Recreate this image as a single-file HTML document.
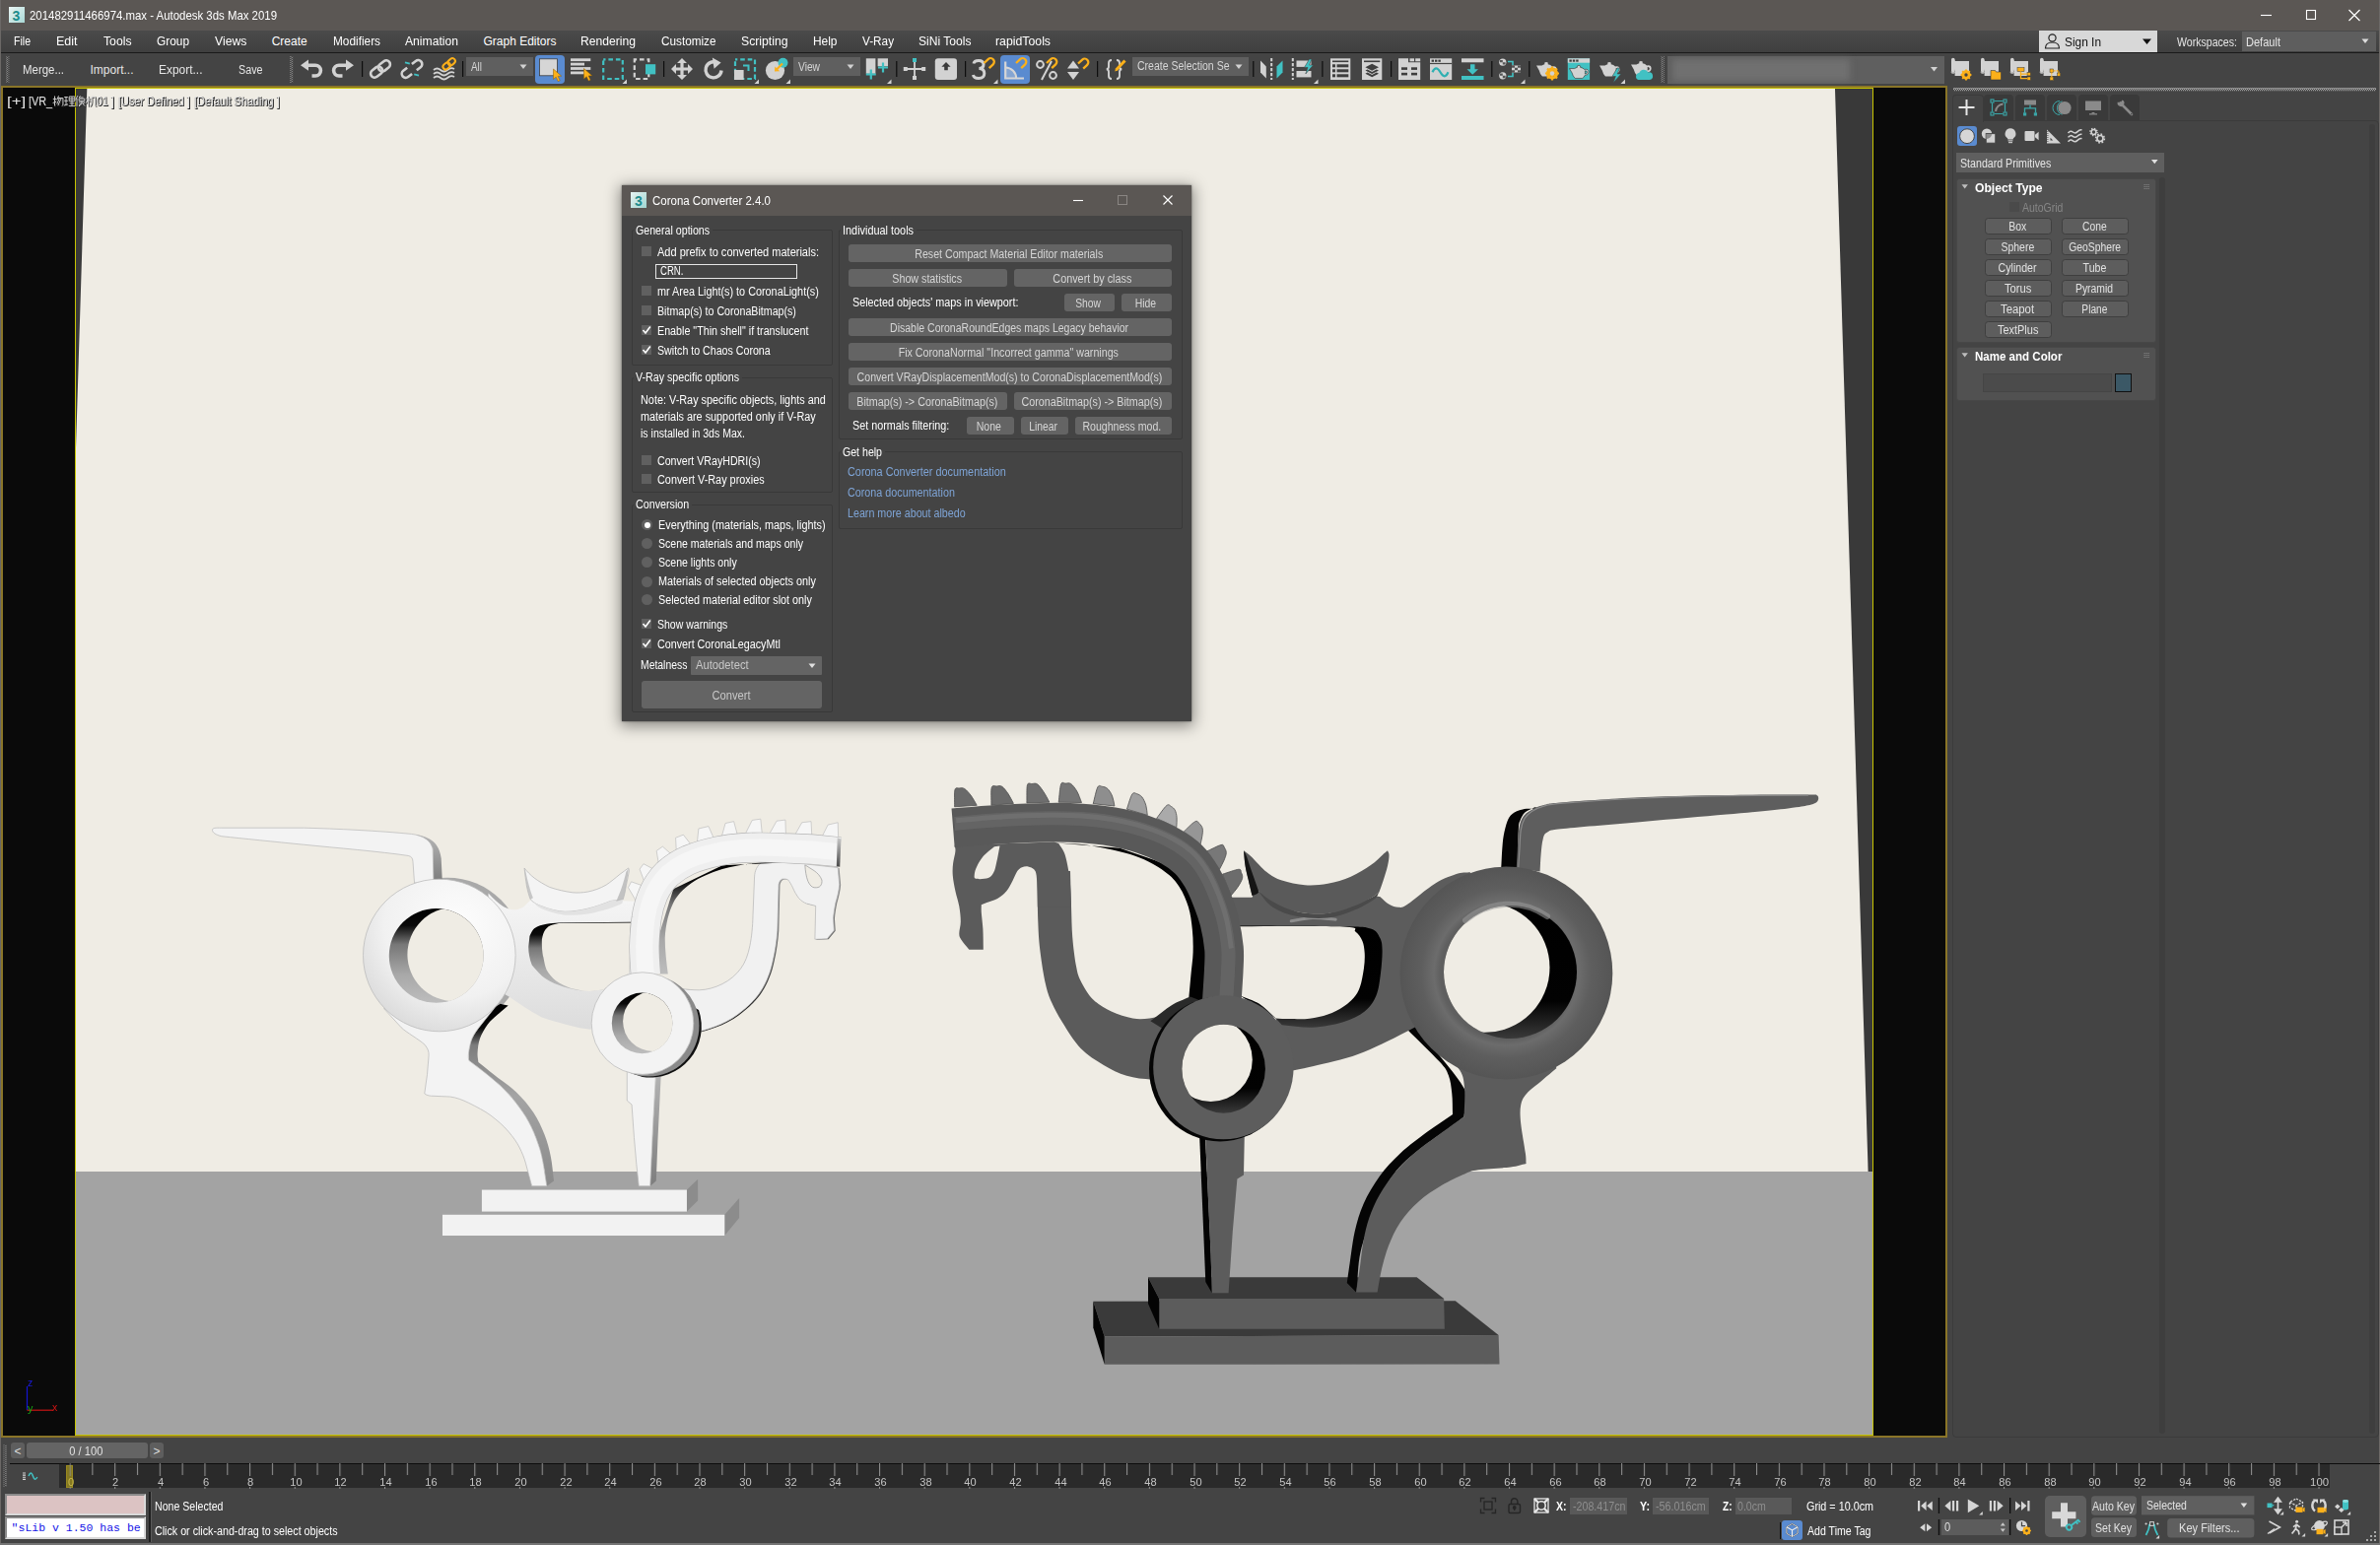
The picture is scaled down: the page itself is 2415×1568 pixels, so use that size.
<!DOCTYPE html>
<html lang="en"><head><meta charset="utf-8"><title>3ds Max</title>
<style>
html,body{margin:0;padding:0;background:#444;}
body{width:2415px;height:1568px;position:relative;overflow:hidden;font-family:"Liberation Sans",sans-serif;font-size:12px;color:#e1e1e1;}
.a{position:absolute;box-sizing:border-box;}
.t{position:absolute;white-space:pre;display:block;}
svg{position:absolute;left:0;top:0;overflow:visible;}
.btn{position:absolute;box-sizing:border-box;background:#646464;border-radius:3px;}
</style></head><body>
<!-- window frame -->
<div class="a" style="left:0;top:0;width:2415px;height:31px;background:#5b5754;"></div>
<div class="a" style="left:0;top:31px;width:2415px;height:22px;background:linear-gradient(#4a4a4a,#3f3f3f);"></div>
<div class="a" style="left:0;top:53px;width:2415px;height:1px;background:#1a1a1a;"></div>
<div class="a" style="left:0;top:54px;width:2415px;height:33px;background:#444;"></div>
<div class="a" style="left:0;top:0;width:1px;height:1568px;background:#6b6866;"></div>
<div class="a" style="left:2414px;top:0;width:1px;height:1568px;background:#6b6866;"></div>
<!-- title bar content -->
<div class="a" style="left:9px;top:7px;width:16px;height:16px;background:linear-gradient(135deg,#eaf5f4,#a9d8d5);"></div>
<span class="t" style="left:12.61px;top:8.65px;font-size:14px;line-height:14px;color:#1d8c8c;font-weight:700;">3</span>
<span class="t" style="left:29.70px;top:9.20px;font-size:13px;line-height:13px;color:#fff;transform:scaleX(0.8777);transform-origin:0 50%;">201482911466974.max - Autodesk 3ds Max 2019</span>
<svg width="2415" height="1568"><g stroke="#fff" stroke-width="1.1" fill="none">
<path d="M2294,15.5H2305"/><rect x="2340.5" y="10.5" width="9" height="9"/><path d="M2383.5,10L2394.5,21M2394.5,10L2383.5,21" stroke-width="1.2"/></g></svg>
<!-- menu bar -->
<span class="t" style="left:13.80px;top:35.64px;font-size:12px;line-height:12px;color:#fff;transform:scaleX(0.8792);transform-origin:0 50%;">File</span>
<span class="t" style="left:56.50px;top:35.64px;font-size:12px;line-height:12px;color:#fff;transform:scaleX(1.0398);transform-origin:0 50%;">Edit</span>
<span class="t" style="left:104.50px;top:35.64px;font-size:12px;line-height:12px;color:#fff;transform:scaleX(1.0174);transform-origin:0 50%;">Tools</span>
<span class="t" style="left:158.70px;top:35.64px;font-size:12px;line-height:12px;color:#fff;transform:scaleX(0.9895);transform-origin:0 50%;">Group</span>
<span class="t" style="left:217.80px;top:35.64px;font-size:12px;line-height:12px;color:#fff;transform:scaleX(1.0222);transform-origin:0 50%;">Views</span>
<span class="t" style="left:275.70px;top:35.64px;font-size:12px;line-height:12px;color:#fff;">Create</span>
<span class="t" style="left:337.50px;top:35.64px;font-size:12px;line-height:12px;color:#fff;transform:scaleX(0.9860);transform-origin:0 50%;">Modifiers</span>
<span class="t" style="left:410.70px;top:35.64px;font-size:12px;line-height:12px;color:#fff;transform:scaleX(1.0120);transform-origin:0 50%;">Animation</span>
<span class="t" style="left:490.50px;top:35.64px;font-size:12px;line-height:12px;color:#fff;">Graph Editors</span>
<span class="t" style="left:589.30px;top:35.64px;font-size:12px;line-height:12px;color:#fff;transform:scaleX(1.0113);transform-origin:0 50%;">Rendering</span>
<span class="t" style="left:670.50px;top:35.64px;font-size:12px;line-height:12px;color:#fff;transform:scaleX(0.9791);transform-origin:0 50%;">Customize</span>
<span class="t" style="left:751.50px;top:35.64px;font-size:12px;line-height:12px;color:#fff;transform:scaleX(1.0174);transform-origin:0 50%;">Scripting</span>
<span class="t" style="left:824.70px;top:35.64px;font-size:12px;line-height:12px;color:#fff;transform:scaleX(0.9927);transform-origin:0 50%;">Help</span>
<span class="t" style="left:874.60px;top:35.64px;font-size:12px;line-height:12px;color:#fff;transform:scaleX(0.9793);transform-origin:0 50%;">V-Ray</span>
<span class="t" style="left:931.50px;top:35.64px;font-size:12px;line-height:12px;color:#fff;transform:scaleX(1.0069);transform-origin:0 50%;">SiNi Tools</span>
<span class="t" style="left:1009.50px;top:35.64px;font-size:12px;line-height:12px;color:#fff;transform:scaleX(1.0238);transform-origin:0 50%;">rapidTools</span>
<!-- sign in / workspaces -->
<div class="a" style="left:2069px;top:31px;width:120px;height:22px;background:#d8d8d8;"></div>
<svg width="2415" height="1568"><g fill="none" stroke="#222" stroke-width="1.2"><circle cx="2082.5" cy="38.5" r="3.6"/><path d="M2075.5,49 q0,-6 7,-6 q7,0 7,6 z"/></g><path d="M2174,39.5h9l-4.5,5.5z" fill="#111"/>
</svg>
<span class="t" style="left:2095.00px;top:36.62px;font-size:12.5px;line-height:12.5px;color:#111;transform:scaleX(0.9508);transform-origin:0 50%;">Sign In</span>
<span class="t" style="left:2208.50px;top:36.84px;font-size:12px;line-height:12px;color:#e6e6e6;transform:scaleX(0.8823);transform-origin:0 50%;">Workspaces:</span>
<div class="a" style="left:2275px;top:32px;width:136px;height:20px;background:#5e5e5e;"></div>
<span class="t" style="left:2279.00px;top:36.84px;font-size:12px;line-height:12px;color:#e6e6e6;transform:scaleX(0.9205);transform-origin:0 50%;">Default</span>
<svg width="2415" height="1568"><path d="M2396.5,39.5h7l-3.5,4.5z" fill="#ddd"/></svg>
<!-- toolbar: text buttons -->
<span class="t" style="left:22.50px;top:65.14px;font-size:12px;line-height:12px;color:#e6e6e6;transform:scaleX(0.9542);transform-origin:0 50%;">Merge...</span>
<span class="t" style="left:91.50px;top:65.14px;font-size:12px;line-height:12px;color:#e6e6e6;">Import...</span>
<span class="t" style="left:161.30px;top:65.14px;font-size:12px;line-height:12px;color:#e6e6e6;transform:scaleX(0.9959);transform-origin:0 50%;">Export...</span>
<span class="t" style="left:241.80px;top:65.14px;font-size:12px;line-height:12px;color:#e6e6e6;transform:scaleX(0.8957);transform-origin:0 50%;">Save</span>
<!-- toolbar dropdowns -->
<div class="a" style="left:473px;top:58px;width:68px;height:19px;background:#5f5f5f;"></div>
<span class="t" style="left:477.50px;top:61.64px;font-size:12px;line-height:12px;color:#d6d6d6;transform:scaleX(0.8248);transform-origin:0 50%;">All</span>
<div class="a" style="left:805px;top:58px;width:68px;height:19px;background:#5f5f5f;"></div>
<span class="t" style="left:809.60px;top:61.64px;font-size:12px;line-height:12px;color:#d6d6d6;transform:scaleX(0.8529);transform-origin:0 50%;">View</span>
<div class="a" style="left:1149px;top:58px;width:118px;height:19px;background:#5f5f5f;"></div>
<span class="t" style="left:1153.60px;top:61.14px;font-size:12px;line-height:12px;color:#d6d6d6;transform:scaleX(0.8760);transform-origin:0 50%;">Create Selection Se</span>
<div class="a" style="left:1692px;top:57px;width:281px;height:28px;background:#5f5f5f;"></div>
<div class="a" style="left:1697px;top:60px;width:180px;height:22px;background:#707070;filter:blur(3px);"></div>
<!-- highlighted buttons -->
<div class="a" style="left:543px;top:56px;width:30px;height:29px;background:#5a8bd0;border-radius:4px;"></div>
<div class="a" style="left:1015px;top:56px;width:30px;height:29px;background:#5a8bd0;border-radius:4px;"></div>
<svg width="2415" height="1568" viewBox="0 0 2415 1568">
<defs>
<g id="magnet"><path d="M0,5.5 L4.2,1.6 a3.6,3.6 0 0 1 5,5.2 L5.2,10.6" fill="none" stroke="#fbb01a" stroke-width="2.3"/></g>
<g id="cursor"><path d="M0,0 L0,10.5 L2.7,8.2 L4.7,12.6 L6.7,11.7 L4.7,7.4 L8.2,7.2 Z" fill="#fbb01a" stroke="#8a5a00" stroke-width=".5"/></g>
<g id="teapot"><path d="M0,4.5 L5.5,4.5 Q7,3.5 8.3,3.2 L8.3,1.6 Q10,0.2 11.7,1.6 L11.7,3.2 Q14.5,3.6 16,5.5 Q20.5,4.5 20.6,8.5 Q20.5,12 16.4,12.2 Q15.5,14.6 14,15.5 L6,15.5 Q3.5,13 2.8,9.5 Z M16.7,7 Q16.9,9 16.6,10.6 Q18.9,10.4 18.9,8.6 Q18.8,6.8 16.7,7Z" fill="#d2d2d2" fill-rule="evenodd"/></g>
<g id="corner"><path d="M0,4.5L4.5,4.5L4.5,0Z" fill="#d2d2d2"/></g>
<g id="dd"><path d="M0,0h7l-3.5,4.5z" fill="#d2d2d2"/></g>
</defs>
<!-- grips -->
<g fill="#8a8a8a">
<rect x="6" y="57" width="3.4" height="27" fill="url(#gripP)"/>
</g>
<defs><pattern id="gripP" width="3.4" height="2" patternUnits="userSpaceOnUse"><rect x="0" y="0" width="1" height="1" fill="#9a9a9a"/><rect x="2" y="1" width="1" height="1" fill="#9a9a9a"/></pattern></defs>
<rect x="294" y="57" width="3.4" height="27" fill="url(#gripP)"/>
<rect x="1685.5" y="57" width="3.4" height="27" fill="url(#gripP)"/>
<!-- separators -->
<g fill="#0e0e0e">
<rect x="367" y="62" width="1.2" height="16"/><rect x="469" y="62" width="1.2" height="16"/><rect x="673" y="62" width="1.2" height="16"/>
<rect x="909.2" y="62" width="1.2" height="16"/><rect x="979" y="62" width="1.2" height="16"/><rect x="1113" y="62" width="1.2" height="16"/>
<rect x="1271.2" y="62" width="1.2" height="16"/><rect x="1341.3" y="62" width="1.2" height="16"/><rect x="1411" y="62" width="1.2" height="16"/>
<rect x="1513.2" y="62" width="1.2" height="16"/><rect x="1551.2" y="62" width="1.2" height="16"/>
</g>
<!-- undo / redo -->
<g transform="translate(305,60)" fill="#d2d2d2"><path d="M0,6.2L8,0.6V11.8Z"/><path d="M7,6.2H15a5.4,5.4 0 0 1 0,10.8H11.5" fill="none" stroke="#d2d2d2" stroke-width="3.6"/></g>
<g transform="translate(359,60) scale(-1,1)" fill="#d2d2d2"><path d="M0,6.2L8,0.6V11.8Z"/><path d="M7,6.2H15a5.4,5.4 0 0 1 0,10.8H11.5" fill="none" stroke="#d2d2d2" stroke-width="3.6"/></g>
<!-- link -->
<g transform="translate(386,70) rotate(-38)" fill="none" stroke="#d2d2d2" stroke-width="2.6"><rect x="-11.5" y="-4" width="13" height="8" rx="4"/><rect x="-1.5" y="-4" width="13" height="8" rx="4"/></g>
<!-- unlink -->
<g transform="translate(418,70) rotate(-38)" fill="none" stroke="#d2d2d2" stroke-width="2.6"><path d="M-3,-4H-8a4,4 0 0 0 0,8H-3"/><path d="M3,-4H8a4,4 0 0 1 0,8H3"/><path d="M-1.5,-9.5L1.5,-5.5M-1.5,5.5L1.5,9.5" stroke="#41c1c3" stroke-width="1.8"/></g>
<!-- bind space warp -->
<g transform="translate(439,60)" fill="none" stroke="#d2d2d2" stroke-width="1.8"><path d="M1,11 q3.5,-3 7,0 t7,0 t7,-1"/><path d="M1,15 q3.5,-3 7,0 t7,0 t7,-1"/><path d="M1,19 q3.5,-3 7,0 t7,0 t7,-1"/>
<g transform="translate(16.5,5) rotate(-40)" stroke="#fbb01a" stroke-width="2"><rect x="-7" y="-2.8" width="8" height="5.6" rx="2.8"/><rect x="-0.5" y="-2.8" width="8" height="5.6" rx="2.8"/></g></g>
<!-- dropdown arrows -->
<use href="#dd" x="527.5" y="65.5"/><use href="#dd" x="859.5" y="65.5"/><use href="#dd" x="1253.5" y="65.5"/><use href="#dd" x="1959" y="68"/>
<!-- select object -->
<rect x="547.5" y="59.8" width="18" height="17" fill="#d6d6d6" stroke="#3c3c3c" stroke-width=".8"/><use href="#cursor" x="561.5" y="70"/>
<!-- select by name -->
<g fill="#d2d2d2"><rect x="579" y="59.3" width="20.3" height="2.8"/><rect x="579" y="63.7" width="14" height="2.8"/><rect x="579" y="68.1" width="20.3" height="2.8"/><rect x="579" y="72.5" width="14" height="2.8"/></g><use href="#cursor" x="592.5" y="69.5"/>
<!-- rect region -->
<rect x="612.2" y="60.4" width="19.6" height="19.6" fill="none" stroke="#41c1c3" stroke-width="2.2" stroke-dasharray="4.6,2.9" stroke-dashoffset="2.3"/><use href="#corner" x="631.5" y="80.5"/>
<!-- window/crossing -->
<rect x="643.8" y="60.4" width="14.5" height="19.6" fill="none" stroke="#d2d2d2" stroke-width="2.2" stroke-dasharray="4.6,2.9" stroke-dashoffset="2.3"/><rect x="655" y="65.2" width="10.2" height="10.2" fill="#41c1c3"/>
<!-- move -->
<g transform="translate(692,70)" fill="#d2d2d2"><path d="M-11,0L-6,-5V-1.6H-1.6V-6H-5L0,-11L5,-6H1.6V-1.6H6V-5L11,0L6,5V1.6H1.6V6H5L0,11L-5,6H-1.6V1.6H-6V5Z"/></g>
<!-- rotate -->
<g transform="translate(724,71)" fill="none" stroke="#d2d2d2" stroke-width="3.4"><path d="M3,-7.6 A8,8 0 1 0 8,0.5"/><path d="M-1.2,-12.4L7.6,-7.6L0.6,-1.2Z" fill="#d2d2d2" stroke="none"/></g>
<!-- scale -->
<rect x="746" y="60.4" width="20" height="19.6" fill="none" stroke="#41c1c3" stroke-width="2.2" stroke-dasharray="4.6,2.9" stroke-dashoffset="2.3"/><rect x="745" y="71" width="9.6" height="10" fill="#d2d2d2"/><path d="M754,66.5H759.5V72" fill="none" stroke="#41c1c3" stroke-width="2"/><use href="#corner" x="765.5" y="80.5"/>
<!-- placement -->
<circle cx="786.5" cy="71.5" r="9.6" fill="#d2d2d2"/><circle cx="794.5" cy="63.8" r="5" fill="#41c1c3"/><path d="M794,64.5L787.5,71" stroke="#fbb01a" stroke-width="2.2"/><path d="M786,72.5L786.3,67.4L791.2,72.2Z" fill="#fbb01a"/><use href="#corner" x="797.5" y="80.5"/>
<!-- pivot -->
<g fill="#d2d2d2"><rect x="878.8" y="59.3" width="9.6" height="15.5"/><rect x="890.6" y="59.3" width="10.4" height="8"/></g>
<g stroke="#41c1c3" stroke-width="2.2"><path d="M883.8,70.5V80.5M878.8,75.5H888.8"/><path d="M896,63.5V73.5M891,68.5H901"/></g><use href="#corner" x="900" y="80.5"/>
<!-- manipulate -->
<g transform="translate(928,70)"><path d="M-10,0H10M0,-8V10" stroke="#d2d2d2" stroke-width="1.8"/><g fill="#d2d2d2"><rect x="-11.2" y="-2" width="4" height="4"/><rect x="7.2" y="-2" width="4" height="4"/><rect x="-2" y="7" width="4" height="4"/></g><rect x="-2" y="-11" width="4" height="4" fill="#41c1c3"/></g>
<!-- keyboard override -->
<rect x="948.8" y="59.3" width="22.2" height="21.7" rx="3" fill="#d2d2d2"/><path d="M960,63L964.6,67.8H961.8V71.2H958.2V67.8H955.4Z" fill="#3a3a3a"/>
<!-- snaps -->
<g transform="translate(987,61)"><path d="M1,3.5 Q1.5,0.5 6,0.5 Q11,0.5 11,4.5 Q11,8.2 6.5,8.6 Q11.8,9 11.8,13.5 Q11.8,18.5 6,18.5 Q1,18.5 0.5,15" fill="none" stroke="#d2d2d2" stroke-width="3"/><use href="#magnet" x="11.5" y="-2.5"/></g><use href="#corner" x="1008" y="80.5"/>
<g transform="translate(1019,60)"><path d="M1.2,2.5V19.5H20" fill="none" stroke="#d6d6d6" stroke-width="2.2"/><path d="M1.2,8.5A11,11 0 0 1 12.2,19.5" fill="none" stroke="#d6d6d6" stroke-width="2"/><path d="M1.2,8.5A11,11 0 0 1 12.2,19.5H1.2Z" fill="#d6d6d6" opacity=".35"/><use href="#magnet" x="12" y="-1.5"/></g>
<g transform="translate(1051,60)"><circle cx="4.5" cy="5.5" r="3.4" fill="none" stroke="#d2d2d2" stroke-width="2"/><circle cx="17.5" cy="16.5" r="3.4" fill="none" stroke="#d2d2d2" stroke-width="2"/><path d="M6,21L16,2" stroke="#d2d2d2" stroke-width="2"/><use href="#magnet" x="11" y="-1.5"/></g>
<g transform="translate(1083,60)"><path d="M0,9.5L6,1.5L12,9.5Z M0,13L12,13L6,21Z" fill="#d2d2d2"/><use href="#magnet" x="11" y="-1"/></g>
<!-- {} pencil -->
<g transform="translate(1122,60)" fill="none" stroke="#d2d2d2" stroke-width="1.9"><path d="M6,1 Q3,1 3,4 V7.5 Q3,10 0.8,10.3 Q3,10.6 3,13 V17 Q3,20 6,20"/><path d="M11,1 Q14,1 14,4 V7.5 Q14,10 16.2,10.3 Q14,10.6 14,13 V17 Q14,20 11,20"/><path d="M19.5,1.5L10.5,11" stroke="#fbb01a" stroke-width="3"/><path d="M9.2,12.4L10,9.8L11.8,11.6Z" fill="#fbb01a" stroke="none"/></g>
<!-- mirror -->
<g transform="translate(1279,59)"><path d="M0,2.5L5.8,8.5V20.5L0,14.5Z" fill="#d2d2d2"/><path d="M22.5,2.5L16.5,8.5V20.5L22.5,14.5Z" fill="#41c1c3"/><path d="M11.2,0V22" stroke="#d2d2d2" stroke-width="2" stroke-dasharray="3.2,1.8"/></g>
<!-- align -->
<g transform="translate(1310,59)"><path d="M1.8,0V22" stroke="#d2d2d2" stroke-width="2" stroke-dasharray="3.2,1.8"/><rect x="5.5" y="2.5" width="15" height="6.4" fill="#d2d2d2"/><rect x="5.5" y="13" width="15" height="6.4" fill="#d2d2d2"/><path d="M18.5,1L13.5,9.5H17L14.8,16L22.5,7H18.6L21,1Z" fill="#41c1c3" stroke="#444" stroke-width=".6"/></g><use href="#corner" x="1333" y="80.5"/>
<!-- scene explorer -->
<g transform="translate(1350,59.3)"><rect width="20.3" height="21.7" fill="#d2d2d2"/><g fill="#3e3e3e"><rect x="2" y="2.2" width="16.3" height="1.6"/><rect x="2" y="6" width="3" height="3"/><rect x="6.5" y="6" width="11.8" height="3"/><rect x="2" y="11" width="3" height="3"/><rect x="6.5" y="11" width="11.8" height="3"/><rect x="2" y="16" width="3" height="3"/><rect x="6.5" y="16" width="11.8" height="3"/></g></g>
<!-- layer explorer -->
<g transform="translate(1382,59.3)"><rect width="20.3" height="21.7" fill="#d2d2d2"/><g fill="#3e3e3e"><rect x="2" y="2.2" width="16.3" height="1.6"/><path d="M10.2,5.5L17,9L10.2,12.5L3.4,9Z"/><path d="M3.4,12.2L5.6,11.1L10.2,13.6L14.8,11.1L17,12.2L10.2,15.8Z"/><path d="M3.4,15.4L5.6,14.3L10.2,16.8L14.8,14.3L17,15.4L10.2,19Z"/></g></g>
<!-- ribbon -->
<g transform="translate(1419,59.3)"><path d="M0,0H10V4H22.2V21.7H0Z" fill="#d2d2d2"/><rect x="11.5" y="0" width="4.5" height="3" fill="#d2d2d2"/><rect x="17.2" y="0" width="5" height="3" fill="#d2d2d2"/><g fill="#3e3e3e"><rect x="3" y="9" width="6" height="2.6"/><rect x="13" y="9" width="6" height="2.6"/><rect x="3" y="14.5" width="6" height="2.6"/><rect x="13" y="14.5" width="6" height="2.6"/></g></g>
<!-- curve editor -->
<g transform="translate(1451,59.3)"><rect width="22.2" height="21.7" fill="#d2d2d2"/><rect x="0" y="4.6" width="22.2" height="1.2" fill="#444"/><g fill="#3e3e3e"><rect x="1.6" y="1.3" width="2.4" height="2.2"/><rect x="5" y="1.3" width="2.4" height="2.2"/><rect x="8.4" y="1.3" width="2.4" height="2.2"/></g><path d="M2.5,14 q3.5,-8 8,0 t8,0" fill="none" stroke="#2fb0b2" stroke-width="2.2"/></g>
<!-- dope sheet -->
<g transform="translate(1483,59.3)"><rect width="22.5" height="4" fill="#d2d2d2"/><rect x="0" y="17.7" width="22.5" height="4" fill="#41c1c3"/><path d="M9,6H13.5V11H17L11.2,16.5L5.5,11H9Z" fill="#41c1c3"/></g>
<!-- schematic -->
<g transform="translate(1521,59)"><circle cx="3.8" cy="4.2" r="3.6" fill="#d2d2d2"/><circle cx="3.8" cy="17.8" r="3.6" fill="#d2d2d2"/><rect x="13" y="7.5" width="9" height="7" fill="#d2d2d2"/><path d="M1,2h2.8v2.2h2.8v2.4H3.8V4.2H1Z M1,15.6h2.8v2.2h2.8v2.4H3.8V17.8H1Z M13,7.5h3v2.3h3V7.5h3v2.3h-3v2.4h3v2.3h-3v-2.3h-3v2.3h-3v-2.3h3V9.8h-3Z" fill="#555"/><path d="M9,3.5H14V7 M9,18.5H14V15" fill="none" stroke="#41c1c3" stroke-width="1.6"/></g><use href="#corner" x="1543" y="80.5"/>
<!-- teapots -->
<use href="#teapot" x="1559" y="62"/><g transform="translate(1575,74.5)"><circle r="4.6" fill="none" stroke="#fbb01a" stroke-width="3"/><g stroke="#fbb01a" stroke-width="2.2"><path d="M0,-7V7M-7,0H7M-5,-5L5,5M-5,5L5,-5"/></g><circle r="2.2" fill="#d2d2d2"/></g>
<rect x="1590.8" y="59.3" width="22.3" height="21.7" fill="#41c1c3"/><rect x="1590.8" y="59.3" width="22.3" height="4.4" fill="#d2d2d2"/><g fill="#3e3e3e"><rect x="1592.4" y="60.5" width="2.4" height="2.2"/><rect x="1595.8" y="60.5" width="2.4" height="2.2"/><rect x="1599.2" y="60.5" width="2.4" height="2.2"/></g><g transform="translate(1592.5,65.5) scale(.95,.9)"><use href="#teapot" stroke="#3a3a3a" stroke-width=".7"/></g>
<use href="#teapot" x="1623" y="62"/><path d="M1641,69L1636,77.5H1639.4L1637,84L1645,75H1641.2L1643.5,69Z" fill="#41c1c3" stroke="#444" stroke-width=".6"/><use href="#corner" x="1644.5" y="80.5"/>
<use href="#teapot" x="1655" y="61"/><path d="M1662.5,81 a3.6,3.6 0 0 1 0.8,-7 a5,5 0 0 1 9.2,-0.6 a3.8,3.8 0 0 1 1.4,7.6Z" fill="#41c1c3"/>
<!-- right-side toolbar icons (scrolls) -->
<g id="scroll"><path d="M1980,60.5 a1.8,1.8 0 0 1 3.6,0 V62H1998V77H1983.6V72" fill="#d2d2d2"/><rect x="1980" y="60" width="3.6" height="13" rx="1.8" fill="#d2d2d2"/><ellipse cx="1981.8" cy="73.2" rx="1.9" ry="1.6" fill="#d2d2d2"/><path d="M1980,72.5 a1.8,1.6 0 0 0 3.6,0" fill="none" stroke="#9a9a9a" stroke-width=".7"/></g>
<use href="#scroll" x="30"/><use href="#scroll" x="60"/><use href="#scroll" x="90"/>
<g transform="translate(1995,76)"><circle r="3.4" fill="none" stroke="#fbb01a" stroke-width="2.6"/><g stroke="#fbb01a" stroke-width="1.9"><path d="M0,-5.4V5.4M-5.4,0H5.4M-3.8,-3.8L3.8,3.8M-3.8,3.8L3.8,-3.8"/></g><circle r="1.7" fill="#444"/></g>
<path d="M2020,71.5H2024.5L2025.5,73H2030.5V81H2020Z" fill="#fbb01a" stroke="#3a3a3a" stroke-width=".6"/>
<g fill="#fbb01a" stroke="#3a3a3a" stroke-width=".5"><rect x="2047" y="68.5" width="7" height="4"/><rect x="2057" y="73.5" width="3.4" height="3.4"/><rect x="2057" y="78" width="3.4" height="3.4"/></g><path d="M2050.5,72.5V79.7H2057M2050.5,75.2H2057" fill="none" stroke="#fbb01a" stroke-width="1.3"/>
<g fill="#fbb01a" stroke="#3a3a3a" stroke-width=".5"><rect x="2080" y="70" width="3.6" height="3.6"/><rect x="2087.5" y="74" width="3.2" height="3.2"/><rect x="2080" y="78" width="3.6" height="3.6"/></g><path d="M2081.8,73.6V78M2083.6,71.8H2089V74" fill="none" stroke="#fbb01a" stroke-width="1.2" stroke-dasharray="2,1"/>
</svg>
<!-- viewport -->
<div class="a" style="left:1px;top:87px;width:1975px;height:1372px;background:#0a0a0a;border:2px solid #8a7528;"></div>
<div class="a" style="left:76px;top:89px;width:1825px;height:1368px;background:#efece4;border:1px solid #c6c400;"></div>
<svg width="2415" height="1568" viewBox="0 0 2415 1568">
<polygon points="77,90 88.3,90 77,455" fill="#393939"/>
<polygon points="1862,90 1900,90 1900,1189 1895.6,1189" fill="#393939"/>
<rect x="77" y="1189" width="1823" height="267" fill="#a3a3a3"/>
</svg>
<svg width="2415" height="1568" viewBox="0 0 2415 1568">
<defs>
<linearGradient id="wIn" x1="0" y1="0" x2="0" y2="1"><stop offset="0" stop-color="#000"/><stop offset=".18" stop-color="#0a0a0a"/><stop offset=".38" stop-color="#777"/><stop offset=".7" stop-color="#a8a8a8"/><stop offset="1" stop-color="#bdbdbd"/></linearGradient>
<linearGradient id="wSide" x1="0" y1="0" x2="0" y2="1"><stop offset="0" stop-color="#b5b5b5"/><stop offset="1" stop-color="#7d7d7d"/></linearGradient>
<radialGradient id="wRing" cx=".62" cy=".3" r=".8"><stop offset="0" stop-color="#fdfdfd"/><stop offset=".6" stop-color="#f1f1f1"/><stop offset="1" stop-color="#d6d6d6"/></radialGradient>
<linearGradient id="wBelly" x1="0" y1="0" x2="0" y2="1"><stop offset="0" stop-color="#f6f6f6"/><stop offset="1" stop-color="#dcdcdc"/></linearGradient>
<clipPath id="wcA"><circle cx="442.7" cy="969.9" r="47.9"/></clipPath>
<clipPath id="wcB"><circle cx="651.6" cy="1038.4" r="30.8"/></clipPath>
<linearGradient id="wLegSide" gradientUnits="userSpaceOnUse" x1="0" y1="-60" x2="0" y2="1088"><stop offset="0" stop-color="#000"/><stop offset=".125" stop-color="#080808"/><stop offset=".22" stop-color="#7c7c7c"/><stop offset=".5" stop-color="#a4a4a4"/><stop offset="1" stop-color="#8a8a8a"/></linearGradient>
<linearGradient id="wEdge" gradientUnits="userSpaceOnUse" x1="0" y1="350" x2="0" y2="1500"><stop offset="0" stop-color="#9a9a9a"/><stop offset=".45" stop-color="#6a6a6a"/><stop offset=".8" stop-color="#2a2a2a"/><stop offset="1" stop-color="#111"/></linearGradient>
<linearGradient id="wEnd" x1="0" y1="0" x2="0" y2="1"><stop offset="0" stop-color="#c9c9c9"/><stop offset=".5" stop-color="#8a8a8a"/><stop offset="1" stop-color="#4a4a4a"/></linearGradient>
</defs>
<circle cx="454" cy="967.5" r="76.8" fill="#a9a9a9"/>
<!-- ===== group A: tail + big ring (origin 200,820 s=6.439) ===== -->
<g transform="translate(200,820) scale(0.155304)">
 <path d="M1430,175 C1520,185 1585,230 1595,330 L1602,480 L1540,480 L1540,260 Z" fill="url(#wSide)"/>
 <path d="M100,145 C100,128 120,130 160,130 L700,130 C900,135 1200,150 1400,170 C1480,180 1530,215 1540,270 L1545,480 L1420,490 L1410,350 C1408,325 1400,318 1380,312 C1200,285 900,260 700,240 C500,220 300,200 160,185 C120,175 100,160 100,145 Z" fill="#f3f3f3" stroke="#b9b9b9" stroke-width="4.6"/>
</g>
<!-- ===== group C: legs (origin 380,1030 s=6.263) ===== -->
<g transform="translate(380,1030) scale(0.159668)">
 <!-- rear leg side -->
 <path d="M850.0,-60.0C826.7,-40.0 801.7,-20.0 780.0,0.0C758.3,20.0 738.3,35.0 720.0,60.0C701.7,85.0 680.8,120.0 670.0,150.0C659.2,180.0 656.7,215.0 655.0,240.0C653.3,265.0 658.3,280.0 660.0,300.0C693.3,326.7 720.0,348.3 760.0,380.0C800.0,411.7 858.3,450.0 900.0,490.0C941.7,530.0 980.0,575.0 1010.0,620.0C1040.0,665.0 1061.7,713.3 1080.0,760.0C1098.3,806.7 1110.0,850.8 1120.0,900.0C1130.0,949.2 1133.3,1003.3 1140.0,1055.0L1095.0,1088.0C1088.3,1045.3 1084.2,1004.7 1075.0,960.0C1065.8,915.3 1055.8,866.7 1040.0,820.0C1024.2,773.3 1003.3,723.3 980.0,680.0C956.7,636.7 930.0,598.3 900.0,560.0C870.0,521.7 836.7,485.0 800.0,450.0C763.3,415.0 713.3,376.7 680.0,350.0C646.7,323.3 626.7,310.0 600.0,290.0C600.0,270.0 596.7,253.3 600.0,230.0C603.3,206.7 606.7,178.3 620.0,150.0C633.3,121.7 656.7,91.7 680.0,60.0C703.3,28.3 740.0,-18.3 760.0,-40.0C780.0,-61.7 786.7,-60.0 800.0,-70.0L850.0,-60.0Z" fill="url(#wLegSide)"/>
 <!-- rear leg front -->
 <path d="M60,-40 L170,80 C200,110 290,160 320,190 C340,215 347,235 345,260 L335,380 L318,500 C330,510 345,514 360,515 L480,520 C520,525 560,540 600,560 C650,585 700,610 740,640 C780,670 820,705 850,740 C880,775 905,810 920,840 C940,880 952,910 960,940 L1000,1088 L1095,1088 L1075,960 C1065,900 1055,860 1040,820 C1025,775 1005,725 980,680 C960,640 930,600 900,560 C870,520 835,485 800,450 C760,415 720,380 680,350 L600,290 C595,270 597,250 600,230 C605,200 610,175 620,150 C635,115 655,90 680,60 L760,-40 Z" fill="#f3f3f3" stroke="#b9b9b9" stroke-width="4.6"/>
 <!-- front leg side -->
 <path d="M1790,360 L1822,355 L1800,800 L1790,1055 L1752,1088 L1770,700 Z" fill="url(#wSide)"/>
 <!-- front leg front -->
 <path d="M1605,340 L1605,545 L1635,570 L1650,780 L1665,950 L1680,1088 L1752,1088 L1770,700 L1790,340 Z" fill="#f3f3f3" stroke="#b9b9b9" stroke-width="4.6"/>
 <!-- base -->
 <polygon points="1985,1112 2055,1045 2055,1180 1985,1250" fill="#8c8c8c"/>
 <rect x="682" y="1112" width="1303" height="138" fill="#f2f2f2"/>
 <polygon points="2225,1270 2318,1165 2318,1290 2225,1403" fill="#8c8c8c"/>
 <rect x="432" y="1270" width="1793" height="133" fill="#f2f2f2"/>
</g>
<!-- ===== group D: body, saddle (origin 480,860 s=6.4375) ===== -->
<g transform="translate(480,860) scale(0.155340)">
 <!-- body: upper band + belly + junction -->
 <path d="M100,300 C170,380 230,415 290,405 C310,400 320,395 330,390 L375,345 L985,350 L1060,352 L1060,820 L850,930 L770,1190 C700,1180 650,1170 600,1155 C550,1140 500,1130 450,1110 C400,1085 370,1065 330,1040 L235,975 L100,900 Z" fill="url(#wBelly)"/>
 <!-- body hole -->
 <path d="M370,580 C380,555 390,540 400,530 C425,512 450,505 480,500 C510,495 530,493 560,492 L1030,488 L1020,820 L850,930 C800,935 750,937 700,935 C650,930 600,915 560,900 C520,885 480,865 450,840 C420,810 400,790 385,770 C370,730 362,690 362,650 Z" fill="url(#wIn)"/>
 <path d="M450,600 C455,575 460,555 470,540 C485,520 500,510 520,505 L560,495 L1030,492 L1020,820 L850,930 L760,940 C720,937 680,930 640,920 C600,905 570,890 540,870 C515,850 495,825 480,800 C470,775 465,750 460,720 C452,690 448,640 450,600 Z" fill="#efece4"/>
 <!-- saddle -->
 <path d="M335,135 C340,180 345,215 350,250 C357,285 365,315 375,340 C400,365 420,375 450,385 C500,405 550,418 600,420 C650,420 700,412 750,400 C800,388 850,370 900,350 L980,340 C990,310 995,280 1000,250 C1008,215 1015,180 1020,150 L1015,135 C995,150 980,160 960,175 C930,200 900,225 870,245 C830,268 790,282 750,290 C715,296 685,298 650,295 C600,288 550,277 500,260 C465,243 430,222 400,200 C375,180 355,160 335,135 Z" fill="#f4f4f4" stroke="#b4b4b4" stroke-width="4.6"/>
 <path d="M375,340 C400,365 420,375 450,385 C500,405 550,418 600,420 C650,420 700,412 750,400 C800,388 850,370 900,350 L980,340 L975,365 C940,385 850,415 750,435 C700,442 650,445 600,442 C540,435 470,415 420,385 Z" fill="#e2e2e2"/>
 <path d="M1016,138 C1012,180 1005,220 1000,250 C995,285 988,315 980,340 L935,352 C960,300 985,230 1000,160 Z" fill="#b9b9b9" opacity=".85"/>
 <path d="M335,135 C340,180 345,215 350,250 C357,285 365,315 375,340 L392,330 C372,280 352,200 342,150 Z" fill="#bcbcbc" opacity=".8"/>
</g>
<!-- big ring -->
<circle cx="445.8" cy="969.5" r="77.3" fill="url(#wRing)" stroke="#b9b9b9" stroke-width=".75"/>
<circle cx="442.7" cy="969.9" r="47.9" fill="url(#wIn)"/>
<circle cx="461" cy="968.6" r="47.6" fill="#efece4" clip-path="url(#wcA)"/>
<!-- ===== group B: neck, head, mane (origin 500,820 s=6.439) ===== -->
<g transform="translate(500,820) scale(0.155304)">
 <!-- mane teeth -->
 <g fill="#f6f6f6" stroke="#b8b8b8" stroke-width="4">
  <path d="M2150,190 L2190,110 L2255,95 L2258,200 Z"/>
  <path d="M1975,175 L2020,95 L2080,88 L2085,185 Z"/>
  <path d="M1810,165 L1855,85 L1912,78 L1915,175 Z"/>
  <path d="M1650,170 L1695,80 L1750,72 L1760,170 Z"/>
  <path d="M1495,190 L1520,100 L1575,88 L1600,180 Z"/>
  <path d="M1335,230 L1345,135 L1410,120 L1445,200 Z"/>
  <path d="M1200,290 L1195,195 L1245,175 L1300,245 Z"/>
  <path d="M1085,370 L1070,280 L1110,252 L1175,310 Z"/>
  <path d="M990,480 L960,400 L985,365 L1060,405 Z"/>
  <path d="M935,605 L885,520 L905,482 L985,510 Z"/>
 </g>
 <!-- chest S curve side (offset copy) -->
 <path d="M1760,350 C1725,380 1712,410 1710,450 L1700,700 C1698,780 1692,840 1680,900 C1668,960 1650,1010 1620,1050 C1590,1090 1550,1125 1500,1150 C1450,1175 1400,1188 1350,1190 C1310,1190 1270,1187 1230,1180 L1230,1480 L1310,1470 C1360,1460 1410,1445 1450,1430 C1500,1410 1555,1385 1600,1350 C1660,1305 1715,1255 1750,1200 C1790,1140 1815,1070 1830,1000 C1845,935 1855,870 1860,800 L1868,500 C1872,480 1880,470 1890,465 C1905,462 1918,463 1930,470 C1942,485 1950,500 1960,520 C1970,545 1985,570 2000,590 C2015,605 2030,617 2050,625 L2110,640 L2105,858 L2185,855 L2230,800 L2225,720 C2228,685 2233,655 2240,620 C2252,580 2262,540 2265,500 L2255,390 L2030,365 L1790,350 Z" fill="url(#wEdge)" transform="translate(9,3)"/>
 <!-- chest S curve front -->
 <path d="M1760,350 C1725,380 1712,410 1710,450 L1700,700 C1698,780 1692,840 1680,900 C1668,960 1650,1010 1620,1050 C1590,1090 1550,1125 1500,1150 C1450,1175 1400,1188 1350,1190 C1310,1190 1270,1187 1230,1180 L1230,1480 L1310,1470 C1360,1460 1410,1445 1450,1430 C1500,1410 1555,1385 1600,1350 C1660,1305 1715,1255 1750,1200 C1790,1140 1815,1070 1830,1000 C1845,935 1855,870 1860,800 L1868,500 C1872,480 1880,470 1890,465 C1905,462 1918,463 1930,470 C1942,485 1950,500 1960,520 C1970,545 1985,570 2000,590 C2015,605 2030,617 2050,625 L2110,640 L2105,858 L2185,855 L2230,800 L2225,720 C2228,685 2233,655 2240,620 C2252,580 2262,540 2265,500 L2255,390 L2030,365 L1790,350 Z" fill="#f1f1f1" stroke="#b6b6b6" stroke-width="4.6"/>
 <!-- eye loop -->
 <path d="M2040,372 C2042,410 2048,450 2060,480 C2072,505 2085,518 2100,520 C2120,522 2133,518 2140,510 C2150,498 2152,485 2150,470 C2140,445 2122,425 2100,410 Z" fill="#efece4" stroke="#a0a0a0" stroke-width="5"/>
 <!-- neck inner shadow (dark edge under tube) -->
 <path d="M2000,352 C1900,350 1800,352 1750,358 C1650,365 1570,380 1500,400 C1420,425 1350,455 1300,490 C1240,530 1200,580 1180,620 C1150,680 1130,760 1125,850 C1125,930 1135,1010 1145,1085 L1090,1085 L1080,850 L1180,530 L1500,375 Z" fill="url(#wIn)"/>
 <!-- neck / mane tube -->
 <path d="M2265,288 C2140,272 2020,264 1900,262 C1815,258 1735,256 1650,260 C1590,264 1530,270 1470,283 C1400,298 1340,315 1280,340 C1225,365 1180,395 1140,430 C1100,470 1070,515 1050,560 C1028,610 1012,665 1005,720 C996,780 992,840 990,900 C990,960 994,1020 1000,1090" fill="none" stroke="#b4b4b4" stroke-width="198"/>
 <path d="M2265,288 C2140,272 2020,264 1900,262 C1815,258 1735,256 1650,260 C1590,264 1530,270 1470,283 C1400,298 1340,315 1280,340 C1225,365 1180,395 1140,430 C1100,470 1070,515 1050,560 C1028,610 1012,665 1005,720 C996,780 992,840 990,900 C990,960 994,1020 1000,1090" fill="none" stroke="#efefef" stroke-width="190"/>
 <path d="M2265,288 C2140,272 2020,264 1900,262 C1815,258 1735,256 1650,260 C1590,264 1530,270 1470,283 C1400,298 1340,315 1280,340 C1225,365 1180,395 1140,430 C1100,470 1070,515 1050,560 C1028,610 1012,665 1005,720 C996,780 992,840 990,900 C990,960 994,1020 1000,1090" fill="none" stroke="#f6f6f6" stroke-width="110"/>
 <path d="M2252,195 L2276,203 L2268,385 L2246,382 Z" fill="url(#wEnd)"/>
</g>
<!-- small ring -->
<g>
 <path d="M700,1020 A51.8,51.8 0 0 1 640,1089 L652,1093 A51.8,51.8 0 0 0 709,1025 Z" fill="#111"/>
 <circle cx="658" cy="1041" r="51.5" fill="#8a8a8a"/>
 <circle cx="652" cy="1038.6" r="51.8" fill="#f3f3f3" stroke="#b9b9b9" stroke-width=".75"/>
 <circle cx="651.6" cy="1038.4" r="30.8" fill="url(#wIn)"/>
 <circle cx="662.5" cy="1036.5" r="30.4" fill="#efece4" clip-path="url(#wcB)"/>
</g>
</svg>
<svg width="2415" height="1568" viewBox="0 0 2415 1568">
<defs>
<linearGradient id="dWall" x1="0" y1="0" x2="0" y2="1"><stop offset="0" stop-color="#000"/><stop offset=".72" stop-color="#020202"/><stop offset=".9" stop-color="#262626"/><stop offset="1" stop-color="#3a3a3a"/></linearGradient>
<linearGradient id="dTube" x1="0" y1="0" x2="0" y2="1"><stop offset="0" stop-color="#555"/><stop offset="1" stop-color="#5e5e5e"/></linearGradient>
<radialGradient id="dRing" cx=".5" cy=".5" r=".5"><stop offset="0" stop-color="#5f5f5f"/><stop offset=".62" stop-color="#5f5f5f"/><stop offset=".68" stop-color="#6c6c6c"/><stop offset=".8" stop-color="#5e5e5e"/><stop offset="1" stop-color="#555"/></radialGradient>
<clipPath id="dcA"><circle cx="1532.5" cy="986.5" r="67.5"/></clipPath>
<clipPath id="dcB"><ellipse cx="1241.6" cy="1084.8" rx="42.3" ry="45"/></clipPath>
<clipPath id="dcRing"><circle cx="1528.4" cy="987.5" r="107.9"/></clipPath>
</defs>
<!-- base (group I) -->
<g transform="translate(1090,1040) scale(0.233008)">
<polygon points="83,1205 1660,1203 1848,1352 132,1358" fill="#3a3a3a"/>
<polygon points="132,1358 1848,1352 1852,1478 132,1480" fill="#5c5c5c"/>
<polygon points="83,1205 132,1358 132,1480 83,1320" fill="#040404"/>
<polygon points="322,1100 1492,1100 1610,1193 370,1193" fill="#3a3a3a"/>
<polygon points="370,1193 1610,1193 1613,1325 370,1325" fill="#5c5c5c"/>
<polygon points="322,1100 370,1193 370,1325 322,1215" fill="#040404"/>
</g>
<!-- tail -->
<path d="M1560.5,820.6C1558.4,820.9 1549.3,820.5 1545.0,821.4C1540.6,822.3 1537.2,823.9 1534.6,826.0C1532.0,828.0 1530.9,830.1 1529.4,833.8C1527.9,837.6 1526.6,843.5 1525.7,848.3C1524.8,853.2 1524.7,857.3 1524.2,862.8C1523.8,868.4 1523.6,875.3 1523.2,881.5L1539.8,881.5C1540.1,868.4 1540.4,850.2 1540.8,842.1C1541.3,834.0 1541.4,835.7 1542.5,832.8C1543.6,829.9 1545.0,826.8 1547.4,824.5C1549.9,822.3 1554.1,821.1 1557.4,819.3C1558.4,819.8 1562.6,820.2 1560.5,820.6Z" fill="#040404"/>
<path d="M1845.2,810.0C1845.2,808.8 1844.9,807.5 1843.2,806.9C1841.4,806.3 1850.1,806.5 1834.9,806.5C1819.7,806.5 1779.7,806.5 1752.0,806.9C1724.4,807.3 1696.8,807.8 1669.2,809.0C1641.6,810.2 1603.6,812.8 1586.4,814.2C1569.1,815.5 1571.2,815.9 1565.7,817.3C1560.1,818.7 1556.7,820.4 1553.2,822.5C1549.8,824.5 1547.0,826.4 1545.0,829.7C1543.0,833.0 1542.1,836.6 1541.2,842.1C1540.4,847.6 1540.2,856.3 1539.8,862.8C1539.4,869.4 1539.1,875.3 1538.7,881.5L1562.6,884.6C1562.9,878.7 1563.1,872.5 1563.6,867.0C1564.1,861.5 1564.6,855.2 1565.7,851.4C1566.8,847.7 1566.8,846.3 1570.2,844.6C1573.7,842.9 1569.9,842.9 1586.4,841.1C1602.9,839.3 1641.6,836.3 1669.2,833.8C1696.8,831.4 1727.9,828.8 1752.0,826.6C1776.2,824.4 1800.4,821.9 1814.2,820.4C1828.0,818.8 1830.0,818.3 1834.9,817.3C1839.7,816.2 1841.4,815.4 1843.2,814.2C1844.9,813.0 1845.2,811.2 1845.2,810.0Z" fill="#5e5e5e"/>
<path d="M1834.9,807.1C1821.1,807.2 1779.7,807.3 1752.0,807.7C1724.4,808.2 1696.8,808.8 1669.2,810.0C1641.6,811.3 1603.6,813.8 1586.4,815.2C1569.1,816.6 1571.0,816.9 1565.7,818.3C1560.3,819.7 1557.4,821.4 1554.3,823.5C1551.2,825.6 1548.9,827.6 1547.0,830.7C1545.2,833.8 1544.2,836.8 1543.3,842.1C1542.4,847.5 1542.3,856.4 1541.9,862.8C1541.4,869.2 1541.0,877.5 1540.8,880.4" fill="none" stroke="#8a8a8a" stroke-width="1.2"/>
<!-- rear leg -->
<path d="M1427.9,1044.7C1438.7,1055.5 1453.5,1069.5 1460.5,1077.3C1467.5,1085.0 1467.7,1085.8 1469.8,1091.3C1471.9,1096.7 1472.6,1103.3 1473.3,1109.9C1474.0,1116.5 1473.8,1123.9 1474.0,1130.9C1465.6,1136.7 1457.7,1141.7 1448.8,1148.3C1440.0,1155.0 1429.0,1162.9 1420.9,1170.5C1412.7,1178.1 1406.1,1185.2 1399.9,1193.8C1393.7,1202.3 1387.8,1212.4 1383.6,1221.7C1379.4,1231.1 1377.1,1239.6 1374.7,1249.7C1372.4,1259.8 1370.9,1273.6 1369.6,1282.3C1368.3,1291.1 1367.7,1295.5 1366.8,1302.1L1376.1,1311.5C1378.6,1294.0 1376.9,1279.4 1383.6,1259.0C1390.3,1238.6 1399.2,1210.1 1416.2,1189.1C1433.2,1168.2 1462.5,1151.8 1485.6,1133.2C1485.8,1123.9 1494.6,1120.8 1486.1,1105.2C1477.6,1089.7 1451.9,1061.7 1434.9,1040.0L1427.9,1044.7Z" fill="#050505"/>
<path d="M1434.9,1035.3C1444.2,1046.2 1455.0,1059.4 1462.8,1068.0C1470.6,1076.5 1477.6,1080.4 1481.5,1086.6C1485.3,1092.8 1485.4,1097.5 1486.1,1105.2C1486.8,1113.0 1485.8,1123.9 1485.6,1133.2C1478.0,1138.6 1471.3,1143.3 1462.8,1149.5C1454.3,1155.7 1442.6,1163.9 1434.9,1170.5C1427.1,1177.1 1422.0,1182.1 1416.2,1189.1C1410.4,1196.1 1404.4,1204.7 1399.9,1212.4C1395.4,1220.2 1392.1,1228.0 1389.4,1235.7C1386.7,1243.5 1385.1,1250.9 1383.6,1259.0C1382.0,1267.2 1381.3,1275.9 1380.1,1284.7C1378.9,1293.4 1377.5,1302.5 1376.1,1311.5L1397.6,1311.5C1399.1,1303.3 1400.3,1294.9 1402.2,1287.0C1404.2,1279.0 1406.1,1271.5 1409.2,1263.7C1412.3,1255.9 1415.8,1247.8 1420.9,1240.4C1425.9,1233.0 1432.5,1225.6 1439.5,1219.4C1446.5,1213.2 1455.0,1207.8 1462.8,1203.1C1470.6,1198.4 1479.9,1194.1 1486.1,1191.5C1492.3,1188.8 1492.3,1188.4 1500.1,1187.3C1507.9,1186.1 1524.6,1185.5 1532.7,1184.5C1540.8,1183.4 1543.3,1182.1 1548.6,1181.0C1548.3,1177.5 1548.8,1177.3 1547.9,1170.5C1547.0,1163.7 1544.0,1148.3 1543.2,1140.2C1542.4,1132.0 1542.2,1126.6 1543.2,1121.6C1544.2,1116.5 1545.3,1114.2 1549.0,1109.9C1552.7,1105.6 1560.3,1100.2 1565.3,1095.9C1570.4,1091.7 1574.7,1088.2 1579.3,1084.3L1570.0,1035.3L1434.9,1035.3Z" fill="#5c5c5c"/>
<!-- body: upper band, belly, junction to big ring (group F origin 1130,840 s 6.439) -->
<path d="M1248.0,910.7L1270.5,910.7C1272.4,908.3 1268.3,901.2 1276.0,903.7C1283.6,906.1 1304.5,921.5 1316.4,925.4C1328.3,929.3 1335.0,929.3 1347.4,927.0C1359.8,924.6 1382.1,914.3 1390.9,911.4C1399.7,908.6 1397.1,910.4 1400.2,909.9C1403.3,912.5 1406.4,915.8 1409.5,917.7C1412.7,919.5 1415.8,920.8 1418.9,920.8C1422.0,920.8 1422.0,921.7 1428.2,917.7C1434.4,913.6 1447.6,901.9 1456.1,896.7C1464.7,891.5 1473.5,888.5 1479.4,886.6C1485.4,884.7 1487.7,885.8 1491.9,885.3L1491.9,1010.8C1470.6,1022.7 1447.1,1036.7 1428.2,1046.6C1409.3,1056.4 1394.5,1063.9 1378.5,1069.8C1362.4,1075.8 1344.8,1079.2 1331.9,1082.3C1319.0,1085.4 1311.2,1086.4 1300.8,1088.5L1294.6,1033.4L1258.9,1010.8L1248.0,939.4L1248.0,910.7Z" fill="#5c5c5c"/>
<!-- body hole -->
<path d="M1257.3,939.4C1292.6,939.7 1340.7,939.7 1363.0,940.2C1385.2,940.7 1384.7,940.6 1390.9,942.5C1397.1,944.4 1398.3,948.2 1400.2,951.8C1402.2,955.4 1402.4,958.3 1402.6,964.2C1402.7,970.2 1402.0,979.8 1401.0,987.5C1400.0,995.3 1399.1,1004.4 1396.3,1010.8C1393.6,1017.3 1390.3,1022.0 1384.7,1026.4C1379.1,1030.8 1371.8,1034.5 1363.0,1037.2C1354.2,1040.0 1342.2,1042.2 1331.9,1042.7C1321.5,1043.2 1311.2,1041.1 1300.8,1040.3L1294.6,1033.4L1258.9,1010.8L1257.3,939.4Z" fill="url(#dWall)"/>
<path d="M1257.3,940.2C1292.6,940.3 1343.3,939.7 1363.0,940.6C1382.6,941.5 1372.1,943.2 1375.4,945.6C1378.6,948.0 1380.8,951.3 1382.4,954.9C1383.9,958.5 1384.4,962.7 1384.7,967.3C1385.0,972.0 1384.7,977.2 1383.9,982.9C1383.1,988.6 1381.7,996.6 1380.0,1001.5C1378.4,1006.4 1376.7,1009.0 1373.8,1012.4C1371.0,1015.8 1367.4,1018.9 1363.0,1021.7C1358.6,1024.6 1353.1,1027.5 1347.4,1029.5C1341.7,1031.5 1335.3,1033.0 1328.8,1033.8C1322.3,1034.6 1314.3,1034.2 1308.6,1034.1C1302.9,1034.1 1299.3,1033.6 1294.6,1033.4C1288.9,1028.4 1283.5,1022.4 1277.5,1018.6C1271.6,1014.8 1265.1,1013.4 1258.9,1010.8L1257.3,940.2Z" fill="#efece4"/>
<path d="M1310.2,934.7C1313.8,934.2 1324.4,931.9 1331.9,931.6C1339.4,931.4 1351.3,932.9 1355.2,933.2" fill="none" stroke="#9a9a9a" stroke-width="3" stroke-linecap="round" opacity=".8"/>
<!-- big ring -->
<circle cx="1528.4" cy="987.5" r="107.9" fill="url(#dRing)"/>
<circle cx="1532.5" cy="986.5" r="67.5" fill="url(#dWall)"/>
<circle cx="1506.6" cy="981.9" r="65.9" fill="#efece4" clip-path="url(#dcA)"/>
<path d="M1487,934 A68,68 0 0 1 1570,930" fill="none" stroke="#9c9c9c" stroke-width="6" stroke-linecap="round" opacity=".55" />
<!-- chest S-curve + head (src coords) -->
<path d="M1052.6,884.0C1052.8,901.1 1052.8,921.6 1053.3,935.3C1053.8,949.0 1054.3,955.8 1055.6,966.4C1056.9,977.0 1059.0,990.1 1060.9,998.6C1062.8,1007.1 1064.2,1010.8 1067.1,1017.3C1069.9,1023.8 1073.1,1029.7 1078.0,1037.5C1082.9,1045.3 1089.6,1056.7 1096.6,1063.9C1103.6,1071.1 1112.1,1076.2 1119.9,1080.9C1127.7,1085.6 1134.9,1089.3 1143.2,1091.8C1151.5,1094.3 1160.1,1095.0 1169.6,1095.7C1179.1,1096.4 1189.9,1095.9 1200.0,1096.0L1200.0,1029.0C1194.5,1029.2 1189.2,1028.9 1183.6,1029.7C1178.0,1030.5 1172.2,1032.9 1166.5,1033.6C1160.8,1034.2 1155.9,1034.8 1149.4,1033.6C1142.9,1032.4 1134.4,1029.8 1127.7,1026.6C1121.0,1023.4 1114.2,1019.4 1109.0,1014.2C1103.8,1009.0 1099.4,1001.2 1096.6,995.5C1093.8,989.8 1093.3,987.5 1091.9,980.0C1090.5,972.5 1089.0,960.8 1088.2,950.8C1087.4,940.8 1087.4,930.9 1087.0,919.8C1086.6,908.7 1086.3,895.9 1086.0,884.0L1052.6,884.0Z" fill="#5b5b5b"/>
<!-- head (group E origin 950,780) -->
<path d="M968.6,857.7C968.9,859.7 969.7,860.8 969.4,863.9C969.2,867.0 967.5,872.1 967.1,876.3C966.6,880.4 966.4,884.1 966.8,888.7C967.2,893.4 968.3,899.1 969.4,904.2C970.5,909.4 972.4,914.6 973.3,919.8C974.2,925.0 974.8,930.6 974.8,935.3C974.8,940.0 973.2,944.6 973.3,947.7C973.4,950.8 973.9,951.3 975.6,953.9C977.3,956.6 980.8,960.5 983.4,963.7L997.8,963.7C997.7,956.8 997.7,949.4 997.4,943.1C997.0,936.8 996.1,930.1 995.8,926.0C995.6,921.8 995.8,920.8 995.8,918.2C997.6,917.4 998.5,916.9 1001.3,915.9C1004.0,914.9 1008.8,913.9 1012.1,912.0C1015.5,910.1 1018.9,907.3 1021.4,904.2C1024.0,901.1 1025.8,896.7 1027.7,893.4C1029.5,890.0 1030.8,886.3 1032.3,884.1C1033.9,881.9 1035.2,880.9 1037.0,880.2C1038.8,879.4 1041.1,879.0 1043.2,879.4C1045.3,879.8 1048.0,880.9 1049.4,882.5C1050.8,884.1 1051.2,885.1 1051.7,888.7C1052.2,892.3 1052.3,898.9 1052.5,904.2C1052.7,909.5 1052.7,915.1 1052.8,920.5L1087.0,920.5C1086.8,915.1 1086.7,909.5 1086.4,904.2C1086.0,898.9 1086.1,894.9 1085.1,888.7C1084.1,882.5 1082.3,872.4 1080.5,867.0C1078.6,861.5 1076.3,859.7 1074.2,856.1L1069.6,854.5L968.6,857.7Z" fill="#5b5b5b"/>
<path d="M1014.5,858.4C1013.4,863.9 1012.4,870.2 1011.3,874.7C1010.3,879.3 1009.7,882.9 1008.2,885.6C1006.8,888.3 1005.8,890.0 1002.8,891.0C999.8,892.1 992.7,892.5 990.4,891.8C988.0,891.2 988.7,889.2 988.8,887.2C989.0,885.1 989.6,882.5 991.2,879.4C992.7,876.3 995.2,871.9 998.1,868.5C1001.1,865.2 1005.4,862.3 1009.0,859.2L1014.5,858.4Z" fill="#efece4"/>
<!-- mane teeth -->
<g fill="#6a6a6a" stroke="#4f4f4f" stroke-width=".8">
<path d="M968.6,818.8C968.7,813.1 968.2,804.9 968.9,801.7C969.7,798.6 971.7,800.1 973.3,799.9C974.9,799.7 976.7,799.2 978.7,800.5C980.8,801.8 983.6,805.2 985.7,808.0C987.8,810.8 989.3,814.2 991.2,817.3L968.6,818.8Z"/>
<path d="M1005.9,817.3C1006.0,811.3 1005.3,802.6 1006.2,799.4C1007.1,796.2 1009.6,798.0 1011.3,797.9C1013.1,797.7 1014.8,797.0 1016.8,798.3C1018.7,799.6 1021.1,802.8 1023.0,805.6C1024.9,808.5 1026.6,812.1 1028.4,815.4L1005.9,817.3Z"/>
<path d="M1041.9,814.9C1042.1,808.9 1041.6,800.0 1042.4,796.8C1043.3,793.5 1045.4,795.7 1047.1,795.5C1048.7,795.4 1050.6,794.5 1052.5,795.8C1054.4,797.1 1056.6,800.2 1058.7,803.3C1060.8,806.3 1062.9,810.5 1064.9,814.2L1041.9,814.9Z" fill="#6e6e6e"/>
<path d="M1074.2,814.2C1075.0,808.1 1075.4,799.2 1076.6,796.0C1077.7,792.8 1079.5,795.1 1081.2,795.1C1082.9,795.0 1084.7,794.2 1086.7,795.5C1088.6,796.9 1091.1,800.1 1092.9,803.3C1094.7,806.5 1096.0,810.8 1097.5,814.5L1074.2,814.2Z" fill="#757575"/>
<path d="M1109.2,815.7C1110.7,810.1 1112.3,801.8 1113.8,798.9C1115.4,796.0 1116.8,798.1 1118.5,798.3C1120.2,798.6 1122.3,798.9 1123.9,800.5C1125.6,802.1 1127.4,805.0 1128.6,808.0C1129.8,810.9 1130.2,814.7 1130.9,818.0L1109.2,815.7Z" fill="#8e8e8e"/>
<path d="M1143.4,821.2C1145.2,816.1 1147.1,808.7 1148.8,806.1C1150.5,803.5 1151.8,805.1 1153.4,805.6C1155.1,806.1 1157.3,807.1 1158.9,809.0C1160.4,811.0 1161.9,814.2 1162.8,817.3C1163.7,820.3 1163.8,824.0 1164.3,827.4L1143.4,821.2Z" fill="#a0a0a0"/>
<path d="M1173.6,830.5C1177.0,826.2 1181.3,819.6 1183.7,817.6C1186.2,815.6 1187.0,817.7 1188.4,818.5C1189.8,819.3 1191.3,820.4 1192.3,822.2C1193.2,824.1 1193.9,826.8 1194.1,829.7C1194.4,832.6 1193.9,836.4 1193.8,839.8L1173.6,830.5Z" fill="#aaa"/>
<path d="M1200.0,845.2C1204.2,841.4 1209.6,835.4 1212.5,833.9C1215.3,832.3 1215.8,834.7 1217.1,835.9C1218.4,837.1 1219.8,838.8 1220.2,840.9C1220.7,842.9 1220.3,845.5 1219.9,848.3C1219.5,851.1 1218.6,854.5 1217.9,857.7L1200.0,845.2Z" fill="#969696"/>
<path d="M1223.3,864.6C1228.5,862.3 1235.7,858.3 1238.9,857.5C1242.0,856.7 1241.4,858.6 1242.3,860.0C1243.2,861.4 1244.4,863.5 1244.3,865.7C1244.2,867.9 1243.1,870.4 1242.0,873.2C1240.8,876.0 1238.9,879.4 1237.3,882.5L1223.3,864.6Z" fill="#787878"/>
<path d="M1240.4,887.2C1245.9,885.6 1253.5,882.6 1256.7,882.3C1259.9,882.1 1258.9,884.1 1259.5,885.6C1260.2,887.1 1261.2,888.9 1260.6,891.4C1260.0,893.8 1257.9,897.4 1255.9,900.4C1254.0,903.3 1251.3,906.1 1249.0,908.9L1240.4,887.2Z" fill="#6c6c6c"/>
</g>
<!-- neck inner wall (black) -->
<path d="M1069.6,855.3C1081.5,856.3 1091.6,855.9 1105.3,858.1C1119.0,860.4 1139.2,864.5 1151.9,868.8C1164.6,873.2 1174.3,879.2 1181.7,884.4C1189.2,889.5 1192.6,893.9 1196.6,899.9C1200.7,905.9 1203.7,913.4 1205.9,920.5C1208.1,927.7 1209.0,935.4 1209.8,943.1C1210.6,950.7 1210.8,958.6 1210.6,966.4C1210.4,974.1 1209.1,981.9 1208.4,989.7C1207.7,997.4 1206.9,1006.7 1206.3,1013.0C1205.6,1019.2 1205.2,1022.3 1204.7,1026.9L1221.8,1026.9C1222.3,1017.1 1222.7,1007.5 1223.3,997.4C1224.0,987.3 1226.7,979.3 1225.7,966.4C1224.6,953.4 1222.9,933.8 1217.1,919.8C1211.3,905.8 1204.2,892.3 1190.7,882.5C1177.3,872.7 1154.5,868.0 1136.4,860.8L1069.6,855.3Z" fill="#020202"/>
<path d="M1207.8,1011.4C1201.6,1014.2 1195.9,1015.8 1189.2,1019.9C1182.4,1024.1 1174.7,1030.8 1167.4,1036.3L1179.8,1044.0L1223.3,1017.6L1207.8,1011.4Z" fill="#2a2a2a"/>
<!-- neck tube -->
<path d="M967.1,840.3C974.6,839.7 995.9,837.6 1012.1,836.7C1028.3,835.8 1049.9,834.9 1064.1,834.7C1078.4,834.5 1086.8,834.7 1097.5,835.4C1108.3,836.2 1118.2,837.1 1128.6,839.0C1139.0,840.9 1150.0,843.5 1159.7,846.8C1169.4,850.0 1179.1,854.2 1186.8,858.4C1194.6,862.7 1200.8,867.1 1206.3,872.4C1211.7,877.7 1215.6,883.7 1219.5,890.3C1223.3,896.9 1226.6,904.5 1229.5,912.0C1232.5,919.5 1235.2,926.9 1237.3,935.3C1239.4,943.7 1241.2,954.1 1242.0,962.5C1242.7,970.9 1242.0,977.4 1241.7,985.8C1241.3,994.2 1240.4,1006.1 1240.0,1013.0C1239.5,1019.8 1239.0,1024.6 1238.9,1026.9" fill="none" stroke="#595959" stroke-width="39.6"/>
<path d="M968.6,835.9C975.9,835.3 996.2,833.3 1012.1,832.3C1028.0,831.4 1049.9,830.5 1064.1,830.3C1078.4,830.1 1086.8,830.4 1097.5,831.1C1108.3,831.8 1118.1,832.8 1128.6,834.7C1139.1,836.6 1150.3,839.1 1160.4,842.4C1170.5,845.7 1181.0,850.1 1189.2,854.5C1197.4,859.0 1203.9,863.7 1209.7,869.3C1215.4,874.9 1219.6,881.1 1223.6,887.9C1227.7,894.8 1230.9,902.7 1233.9,910.5C1236.9,918.2 1239.6,925.9 1241.7,934.5C1243.7,943.2 1245.6,953.9 1246.3,962.5C1247.0,971.0 1246.3,977.4 1246.0,985.8C1245.7,994.2 1244.6,1008.4 1244.3,1013.0" fill="none" stroke="#6a6a6a" stroke-width="14" opacity=".7"/>
<path d="M970.2,832.8C977.2,832.2 996.5,830.2 1012.1,829.2C1027.8,828.3 1049.9,827.4 1064.1,827.2C1078.4,827.0 1086.7,827.2 1097.5,828.0C1108.4,828.7 1118.7,829.8 1129.4,831.7C1140.0,833.6 1151.2,836.1 1161.5,839.5C1171.8,842.8 1182.6,847.2 1191.0,851.8C1199.5,856.3 1206.3,861.2 1212.2,867.0C1218.1,872.7 1222.3,879.2 1226.4,886.2C1230.6,893.3 1233.9,901.3 1237.0,909.2C1240.1,917.1 1242.7,924.9 1244.8,933.8C1246.8,942.6 1248.6,957.7 1249.4,962.5" fill="none" stroke="#858585" stroke-width="5" opacity=".35"/>
<!-- saddle (group F) -->
<path d="M1262.0,863.3C1262.5,868.5 1262.8,873.9 1263.6,878.8C1264.3,883.7 1265.5,887.8 1266.7,892.8C1267.8,897.9 1269.3,903.7 1270.5,909.1C1272.4,907.3 1272.2,902.5 1276.0,903.7C1279.7,904.8 1286.3,912.5 1293.1,916.1C1299.8,919.7 1307.3,923.6 1316.4,925.4C1325.4,927.2 1338.4,927.7 1347.4,927.0C1356.5,926.2 1363.5,923.3 1370.7,920.8C1378.0,918.2 1386.1,914.0 1390.9,911.4C1395.7,908.9 1396.6,907.3 1399.5,905.2C1400.7,901.6 1401.9,898.8 1403.3,894.4C1404.8,890.0 1407.0,883.2 1408.0,878.8C1409.0,874.4 1409.5,870.5 1409.5,868.0C1409.5,865.4 1408.5,864.8 1408.0,863.3C1406.4,864.6 1406.2,864.7 1403.3,867.2C1400.5,869.6 1396.3,874.3 1390.9,878.0C1385.5,881.8 1378.0,886.6 1370.7,889.7C1363.5,892.8 1355.2,895.3 1347.4,896.7C1339.7,898.1 1331.9,898.8 1324.1,898.2C1316.4,897.7 1307.3,895.8 1300.8,893.6C1294.4,891.4 1290.5,889.1 1285.3,885.0C1280.1,881.0 1273.7,873.1 1269.8,869.5C1265.9,865.9 1264.6,865.4 1262.0,863.3Z" fill="#5a5a5a"/>
<path d="M1262.0,863.3C1262.5,868.5 1262.8,873.9 1263.6,878.8C1264.3,883.7 1265.5,887.8 1266.7,892.8C1267.8,897.9 1269.3,903.7 1270.5,909.1C1272.6,908.1 1276.0,907.7 1276.8,906.0C1277.5,904.3 1276.4,902.8 1275.2,899.0C1274.0,895.3 1271.5,888.4 1269.8,883.5C1268.1,878.6 1266.4,872.9 1265.1,869.5C1263.8,866.1 1263.0,865.4 1262.0,863.3Z" fill="#151515"/>
<path d="M1276.0,903.7C1281.7,907.8 1286.3,912.5 1293.1,916.1C1299.8,919.7 1307.3,923.6 1316.4,925.4C1325.4,927.2 1338.4,927.7 1347.4,927.0C1356.5,926.2 1363.5,923.3 1370.7,920.8C1378.0,918.2 1386.1,914.0 1390.9,911.4C1395.7,908.9 1396.6,907.3 1399.5,905.2C1397.6,907.8 1398.5,909.8 1394.0,913.0C1389.5,916.2 1380.0,921.5 1372.3,924.6C1364.5,927.7 1356.7,930.7 1347.4,931.6C1338.1,932.5 1325.7,931.9 1316.4,930.1C1307.0,928.3 1298.2,925.2 1291.5,920.8C1284.8,916.4 1281.2,909.4 1276.0,903.7Z" fill="#4a4a4a"/>
<!-- front leg (group I) -->
<path d="M1217.0,1149.5L1223.3,1301.0L1229.8,1312.2L1228.6,1273.0L1222.8,1149.5L1217.0,1149.5Z" fill="#030303"/>
<path d="M1222.8,1147.2L1228.6,1273.0L1229.8,1312.2L1246.6,1312.2L1250.8,1249.7L1255.4,1196.6L1262.0,1192.6L1262.9,1147.2L1222.8,1147.2Z" fill="#5c5c5c"/>
<!-- small ring -->
<ellipse cx="1238" cy="1085" rx="72" ry="73.4" fill="#050505"/>
<ellipse cx="1241.4" cy="1083.3" rx="71.2" ry="73" fill="#5d5d5d"/>
<ellipse cx="1241.6" cy="1084.8" rx="42.3" ry="45" fill="url(#dWall)"/>
<ellipse cx="1228.6" cy="1075.5" rx="42.2" ry="42.5" fill="#efece4" clip-path="url(#dcB)"/>

</svg>
<!-- viewport label + gizmo -->
<style>.vl{text-shadow:1px 1px 0 #262626,0 1px 0 rgba(30,30,30,.55),1px 0 0 rgba(30,30,30,.55);}</style>
<span class="t vl" style="left:6.60px;top:96.64px;font-size:12px;line-height:12px;color:#e4e4e4;transform:scaleX(1.4040);transform-origin:0 50%;text-shadow:none;">[+]</span>
<span class="t vl" style="left:29.00px;top:96.64px;font-size:12px;line-height:12px;color:#e4e4e4;transform:scaleX(0.8996);transform-origin:0 50%;">[VR_</span>
<span class="t vl" style="left:97.70px;top:96.64px;font-size:12px;line-height:12px;color:#e4e4e4;transform:scaleX(0.8843);transform-origin:0 50%;">01 ]</span>
<span class="t vl" style="left:119.50px;top:96.64px;font-size:12px;line-height:12px;color:#e4e4e4;transform:scaleX(0.9096);transform-origin:0 50%;">[User Defined ]</span>
<span class="t vl" style="left:196.70px;top:96.64px;font-size:12px;line-height:12px;color:#e4e4e4;transform:scaleX(0.9088);transform-origin:0 50%;">[Default Shading ]</span>
<svg width="2415" height="1568" viewBox="0 0 2415 1568">
<g stroke="#2a2a2a" stroke-width="1.2" fill="none" opacity=".8" transform="translate(0.9,0.9)">
<!-- 物 -->
<path d="M55.5,97.5v10M53.8,100.5h3.6M53.6,104.5l3.6,-1.4M58.5,99.5h5.4v7.2l-1.2,0.8M59.5,97.2l-1.6,4M60.2,100l-2.4,5.6M62,100l-3.2,7.2"/>
<!-- 理 -->
<path d="M65.2,98.5h3.6M65.2,102.3h3.6M65,107l4,-1.2M67,98.5v8M70.2,98h5.6v4.6h-5.6zM70.2,100.3h5.6M73,98v9.4M70.6,104.8h4.8M69.8,107.4h6.4"/>
<!-- 像 -->
<path d="M78.8,97.2l-2,4M78,100v7.8M81.5,97.4l-1.4,1.6h4.4M80.2,100.2h5.6v2.2h-5.6zM80,104h6.2M83,102.4c0,3 -1,4.6 -3,5.4M83.2,104.4l3,3.2M81.8,105.4l-1.8,1.4M85.6,104.6l-1.6,1.2"/>
<!-- 机 -->
<path d="M87.4,100h4.4M89.6,97.4v10.4M89.4,100.6l-2.2,4M89.8,101l1.8,2M93,98.2h3.4v8.2c0,0.8 0.4,1 1.2,1M93,98.2v5c0,2 -0.6,3.6 -1.6,4.6"/>
</g>
<g stroke="#d8d8d8" stroke-width="1" fill="none" opacity=".92">
<!-- 物 -->
<path d="M55.5,97.5v10M53.8,100.5h3.6M53.6,104.5l3.6,-1.4M58.5,99.5h5.4v7.2l-1.2,0.8M59.5,97.2l-1.6,4M60.2,100l-2.4,5.6M62,100l-3.2,7.2"/>
<!-- 理 -->
<path d="M65.2,98.5h3.6M65.2,102.3h3.6M65,107l4,-1.2M67,98.5v8M70.2,98h5.6v4.6h-5.6zM70.2,100.3h5.6M73,98v9.4M70.6,104.8h4.8M69.8,107.4h6.4"/>
<!-- 像 -->
<path d="M78.8,97.2l-2,4M78,100v7.8M81.5,97.4l-1.4,1.6h4.4M80.2,100.2h5.6v2.2h-5.6zM80,104h6.2M83,102.4c0,3 -1,4.6 -3,5.4M83.2,104.4l3,3.2M81.8,105.4l-1.8,1.4M85.6,104.6l-1.6,1.2"/>
<!-- 机 -->
<path d="M87.4,100h4.4M89.6,97.4v10.4M89.4,100.6l-2.2,4M89.8,101l1.8,2M93,98.2h3.4v8.2c0,0.8 0.4,1 1.2,1M93,98.2v5c0,2 -0.6,3.6 -1.6,4.6"/>
</g>
<!-- axis gizmo -->
<path d="M27.5,1407V1431" stroke="#1414d2" stroke-width="1.2"/><path d="M27.5,1431.2H54" stroke="#c81414" stroke-width="1.2"/>
</svg>
<span class="t" style="left:27.50px;top:1397.99px;font-size:11px;line-height:11px;color:#1a1ae0;transform:scaleX(0.9455);transform-origin:0 50%;">z</span>
<span class="t" style="left:53.40px;top:1422.89px;font-size:11px;line-height:11px;color:#d21414;transform:scaleX(0.9455);transform-origin:0 50%;">x</span>
<span class="t" style="left:27.60px;top:1423.89px;font-size:11px;line-height:11px;color:#14a814;transform:scaleX(0.9818);transform-origin:0 50%;">y</span>
<!-- Corona Converter dialog -->
<div class="a" style="left:631px;top:188px;width:578px;height:544px;background:#444;box-shadow:0 3px 14px 2px rgba(0,0,0,.42),0 0 2px rgba(0,0,0,.5);"></div>
<div class="a" style="left:631px;top:188px;width:578px;height:31px;background:#5b5754;"></div>
<div class="a" style="left:640px;top:195px;width:16px;height:16px;background:linear-gradient(135deg,#e8f4f3,#9fd4d0);"></div>
<span class="t" style="left:644.11px;top:196.65px;font-size:14px;line-height:14px;color:#1d8c8c;font-weight:700;">3</span>
<span class="t" style="left:661.60px;top:197.54px;font-size:12px;line-height:12px;color:#fff;transform:scaleX(0.9569);transform-origin:0 50%;">Corona Converter 2.4.0</span>
<svg width="2415" height="1568"><g stroke="#fff" stroke-width="1.1" fill="none">
<path d="M1089,203.5H1099"/><path d="M1180.5,198.5L1189.5,207.5M1189.5,198.5L1180.5,207.5" stroke-width="1.2"/></g>
<rect x="1134.5" y="198.5" width="9" height="9" fill="none" stroke="#8a8683" stroke-width="1"/>
</svg>
<!-- group boxes -->
<div class="a gb" style="left:641px;top:233px;width:204px;height:138px;"></div>
<div class="a gb" style="left:641px;top:383px;width:204px;height:117px;"></div>
<div class="a gb" style="left:641px;top:512px;width:204px;height:211px;"></div>
<div class="a gb" style="left:851px;top:233px;width:349px;height:213px;"></div>
<div class="a gb" style="left:851px;top:458px;width:349px;height:79px;"></div>
<div class="a" style="left:643px;top:228px;width:80px;height:12px;background:#444;"></div>
<div class="a" style="left:643px;top:378px;width:110px;height:12px;background:#444;"></div>
<div class="a" style="left:643px;top:506px;width:59px;height:12px;background:#444;"></div>
<div class="a" style="left:853px;top:228px;width:77px;height:12px;background:#444;"></div>
<div class="a" style="left:853px;top:452px;width:45px;height:12px;background:#444;"></div>
<style>.gb{border:1px solid #393939;border-radius:2px;box-shadow:inset 0 0 0 0 #000;}
.cb{position:absolute;width:10px;height:10px;background:#606060;}
.rb{position:absolute;width:11px;height:11px;border-radius:6px;background:#606060;}
.db{position:absolute;box-sizing:border-box;background:#646464;border-radius:3px;height:18px;}
</style>
<span class="t" style="left:645.20px;top:228.34px;font-size:12px;line-height:12px;color:#fff;transform:scaleX(0.8864);transform-origin:0 50%;">General options</span>
<span class="t" style="left:645.20px;top:377.04px;font-size:12px;line-height:12px;color:#fff;transform:scaleX(0.8894);transform-origin:0 50%;">V-Ray specific options</span>
<span class="t" style="left:645.20px;top:505.94px;font-size:12px;line-height:12px;color:#fff;transform:scaleX(0.8929);transform-origin:0 50%;">Conversion</span>
<span class="t" style="left:855.20px;top:228.34px;font-size:12px;line-height:12px;color:#fff;transform:scaleX(0.9070);transform-origin:0 50%;">Individual tools</span>
<span class="t" style="left:855.20px;top:452.64px;font-size:12px;line-height:12px;color:#fff;transform:scaleX(0.8818);transform-origin:0 50%;">Get help</span>
<!-- general options -->
<div class="cb" style="left:651px;top:250px;"></div>
<div class="cb" style="left:651px;top:290px;"></div>
<div class="cb" style="left:651px;top:310px;"></div>
<div class="cb" style="left:651px;top:330px;"></div>
<div class="cb" style="left:651px;top:350px;"></div>
<div class="cb" style="left:651px;top:462px;"></div>
<div class="cb" style="left:651px;top:481px;"></div>
<div class="cb" style="left:651px;top:628px;"></div>
<div class="cb" style="left:651px;top:648px;"></div>
<svg width="2415" height="1568"><g stroke="#fff" stroke-width="1.6" fill="none">
<path d="M652.5,335 L655,338 L659.8,331.5"/><path d="M652.5,355 L655,358 L659.8,351.5"/>
<path d="M652.5,633 L655,636 L659.8,629.5"/><path d="M652.5,653 L655,656 L659.8,649.5"/></g></svg>
<span class="t" style="left:666.60px;top:249.84px;font-size:12px;line-height:12px;color:#fff;transform:scaleX(0.9175);transform-origin:0 50%;">Add prefix to converted materials:</span>
<div class="a" style="left:665px;top:268px;width:144px;height:15px;border:1.5px solid #e6e6e6;background:#444;"></div>
<span class="t" style="left:669.70px;top:269.44px;font-size:12px;line-height:12px;color:#fff;transform:scaleX(0.7978);transform-origin:0 50%;">CRN.</span>
<span class="t" style="left:666.60px;top:289.84px;font-size:12px;line-height:12px;color:#fff;transform:scaleX(0.9029);transform-origin:0 50%;">mr Area Light(s) to CoronaLight(s)</span>
<span class="t" style="left:666.60px;top:309.84px;font-size:12px;line-height:12px;color:#fff;transform:scaleX(0.8878);transform-origin:0 50%;">Bitmap(s) to CoronaBitmap(s)</span>
<span class="t" style="left:666.60px;top:329.84px;font-size:12px;line-height:12px;color:#fff;transform:scaleX(0.8927);transform-origin:0 50%;">Enable &quot;Thin shell&quot; if translucent</span>
<span class="t" style="left:666.60px;top:349.84px;font-size:12px;line-height:12px;color:#fff;transform:scaleX(0.8864);transform-origin:0 50%;">Switch to Chaos Corona</span>
<!-- vray options -->
<span class="t" style="left:649.50px;top:400.44px;font-size:12px;line-height:12px;color:#fff;transform:scaleX(0.9053);transform-origin:0 50%;">Note: V-Ray specific objects, lights and</span>
<span class="t" style="left:649.50px;top:417.34px;font-size:12px;line-height:12px;color:#fff;transform:scaleX(0.9031);transform-origin:0 50%;">materials are supported only if V-Ray</span>
<span class="t" style="left:649.50px;top:434.04px;font-size:12px;line-height:12px;color:#fff;transform:scaleX(0.8781);transform-origin:0 50%;">is installed in 3ds Max.</span>
<span class="t" style="left:666.60px;top:462.14px;font-size:12px;line-height:12px;color:#fff;transform:scaleX(0.8863);transform-origin:0 50%;">Convert VRayHDRI(s)</span>
<span class="t" style="left:666.60px;top:481.44px;font-size:12px;line-height:12px;color:#fff;transform:scaleX(0.9046);transform-origin:0 50%;">Convert V-Ray proxies</span>
<!-- conversion -->
<div class="rb" style="left:651px;top:527.3px;"></div><div class="a" style="left:653.5px;top:529.8px;width:6px;height:6px;border-radius:3px;background:#fff;"></div>
<div class="rb" style="left:651px;top:546.2px;"></div>
<div class="rb" style="left:651px;top:565.3px;"></div>
<div class="rb" style="left:651px;top:584.5px;"></div>
<div class="rb" style="left:651px;top:603.4px;"></div>
<span class="t" style="left:668.40px;top:526.84px;font-size:12px;line-height:12px;color:#fff;transform:scaleX(0.9050);transform-origin:0 50%;">Everything (materials, maps, lights)</span>
<span class="t" style="left:668.40px;top:545.84px;font-size:12px;line-height:12px;color:#fff;transform:scaleX(0.8780);transform-origin:0 50%;">Scene materials and maps only</span>
<span class="t" style="left:668.40px;top:564.84px;font-size:12px;line-height:12px;color:#fff;transform:scaleX(0.8785);transform-origin:0 50%;">Scene lights only</span>
<span class="t" style="left:668.40px;top:583.84px;font-size:12px;line-height:12px;color:#fff;transform:scaleX(0.9041);transform-origin:0 50%;">Materials of selected objects only</span>
<span class="t" style="left:668.40px;top:602.84px;font-size:12px;line-height:12px;color:#fff;transform:scaleX(0.8984);transform-origin:0 50%;">Selected material editor slot only</span>
<span class="t" style="left:666.60px;top:628.24px;font-size:12px;line-height:12px;color:#fff;transform:scaleX(0.8762);transform-origin:0 50%;">Show warnings</span>
<span class="t" style="left:666.60px;top:648.14px;font-size:12px;line-height:12px;color:#fff;transform:scaleX(0.8953);transform-origin:0 50%;">Convert CoronaLegacyMtl</span>
<span class="t" style="left:649.50px;top:668.84px;font-size:12px;line-height:12px;color:#fff;transform:scaleX(0.8667);transform-origin:0 50%;">Metalness</span>
<div class="a" style="left:701px;top:666px;width:133px;height:19px;background:#646464;border-radius:1px;"></div>
<span class="t" style="left:705.70px;top:669.34px;font-size:12px;line-height:12px;color:#c8c8c8;transform:scaleX(0.9359);transform-origin:0 50%;">Autodetect</span>
<svg width="2415" height="1568"><path d="M820.5,673.5h7l-3.5,4.5z" fill="#e0e0e0"/></svg>
<div class="db" style="left:651px;top:691px;width:183px;height:28px;"></div>
<span class="t" style="left:721.49px;top:700.04px;font-size:12px;line-height:12px;color:#c8c8c8;transform:scaleX(0.9282);transform-origin:50% 50%;">Convert</span>
<!-- individual tools -->
<div class="db" style="left:861px;top:248px;width:328px;"></div>
<div class="db" style="left:861px;top:273px;width:161px;"></div><div class="db" style="left:1029px;top:273px;width:160px;"></div>
<div class="db" style="left:1080px;top:298px;width:51px;"></div><div class="db" style="left:1138px;top:298px;width:51px;"></div>
<div class="db" style="left:861px;top:323px;width:328px;"></div>
<div class="db" style="left:861px;top:348px;width:328px;"></div>
<div class="db" style="left:861px;top:373px;width:328px;"></div>
<div class="db" style="left:861px;top:398px;width:161px;"></div><div class="db" style="left:1029px;top:398px;width:160px;"></div>
<div class="db" style="left:981px;top:423px;width:48px;"></div><div class="db" style="left:1036px;top:423px;width:48px;"></div><div class="db" style="left:1091px;top:423px;width:98px;"></div>
<span class="t" style="left:915.80px;top:251.84px;font-size:12px;line-height:12px;color:#d6d6d6;transform:scaleX(0.8867);transform-origin:50% 50%;">Reset Compact Material Editor materials</span>
<span class="t" style="left:901.02px;top:276.84px;font-size:12px;line-height:12px;color:#d6d6d6;transform:scaleX(0.8921);transform-origin:50% 50%;">Show statistics</span>
<span class="t" style="left:1063.65px;top:276.84px;font-size:12px;line-height:12px;color:#d6d6d6;transform:scaleX(0.9019);transform-origin:50% 50%;">Convert by class</span>
<span class="t" style="left:864.50px;top:300.84px;font-size:12px;line-height:12px;color:#fff;transform:scaleX(0.9003);transform-origin:0 50%;">Selected objects&#x27; maps in viewport:</span>
<span class="t" style="left:1089.29px;top:301.84px;font-size:12px;line-height:12px;color:#d6d6d6;transform:scaleX(0.8562);transform-origin:50% 50%;">Show</span>
<span class="t" style="left:1150.36px;top:301.84px;font-size:12px;line-height:12px;color:#d6d6d6;transform:scaleX(0.8671);transform-origin:50% 50%;">Hide</span>
<span class="t" style="left:885.71px;top:326.64px;font-size:12px;line-height:12px;color:#d6d6d6;transform:scaleX(0.8763);transform-origin:50% 50%;">Disable CoronaRoundEdges maps Legacy behavior</span>
<span class="t" style="left:898.30px;top:351.84px;font-size:12px;line-height:12px;color:#d6d6d6;transform:scaleX(0.8911);transform-origin:50% 50%;">Fix CoronaNormal &quot;Incorrect gamma&quot; warnings</span>
<span class="t" style="left:848.90px;top:376.54px;font-size:12px;line-height:12px;color:#d6d6d6;transform:scaleX(0.8826);transform-origin:50% 50%;">Convert VRayDisplacementMod(s) to CoronaDisplacementMod(s)</span>
<span class="t" style="left:860.74px;top:401.74px;font-size:12px;line-height:12px;color:#d6d6d6;transform:scaleX(0.8966);transform-origin:50% 50%;">Bitmap(s) -&gt; CoronaBitmap(s)</span>
<span class="t" style="left:1027.94px;top:401.74px;font-size:12px;line-height:12px;color:#d6d6d6;transform:scaleX(0.8935);transform-origin:50% 50%;">CoronaBitmap(s) -&gt; Bitmap(s)</span>
<span class="t" style="left:864.50px;top:425.74px;font-size:12px;line-height:12px;color:#fff;transform:scaleX(0.8987);transform-origin:0 50%;">Set normals filtering:</span>
<span class="t" style="left:989.26px;top:426.84px;font-size:12px;line-height:12px;color:#d6d6d6;transform:scaleX(0.8784);transform-origin:50% 50%;">None</span>
<span class="t" style="left:1041.72px;top:426.84px;font-size:12px;line-height:12px;color:#d6d6d6;transform:scaleX(0.8604);transform-origin:50% 50%;">Linear</span>
<span class="t" style="left:1093.44px;top:426.84px;font-size:12px;line-height:12px;color:#d6d6d6;transform:scaleX(0.8807);transform-origin:50% 50%;">Roughness mod.</span>
<!-- get help -->
<span class="t" style="left:859.50px;top:472.64px;font-size:12px;line-height:12px;color:#7ea4d6;transform:scaleX(0.9062);transform-origin:0 50%;">Corona Converter documentation</span>
<span class="t" style="left:859.50px;top:493.64px;font-size:12px;line-height:12px;color:#7ea4d6;transform:scaleX(0.8969);transform-origin:0 50%;">Corona documentation</span>
<span class="t" style="left:859.50px;top:514.84px;font-size:12px;line-height:12px;color:#7ea4d6;transform:scaleX(0.8926);transform-origin:0 50%;">Learn more about albedo</span>
<!-- command panel -->
<style>.pb{position:absolute;box-sizing:border-box;background:#5d5d5d;border:1px solid #3f3f3f;border-radius:3.5px;height:17px;width:68px;}
.tab{position:absolute;top:96px;width:30px;height:26px;background:#3a3a3a;border-radius:4px 4px 0 0;}</style>
<svg width="2415" height="1568"><defs><pattern id="dotP" width="2" height="3.2" patternUnits="userSpaceOnUse"><rect x="0" y="0" width="1" height="1.2" fill="#e0e0e0"/><rect x="1" y="1.9" width="1" height="1.2" fill="#e0e0e0"/></pattern></defs>
<rect x="1982" y="89" width="429" height="3.2" fill="url(#dotP)"/></svg>
<div class="a" style="left:1981px;top:122px;width:433px;height:1337px;border:1px solid #3b3b3b;border-radius:0 4px 4px 4px;"></div>
<div class="a" style="left:2404px;top:126px;width:6px;height:1329px;background:#3e3e3e;border-radius:3px;"></div>
<div class="a" style="left:2191px;top:180px;width:5.5px;height:1275px;background:#3e3e3e;border-radius:3px;"></div>
<div class="tab" style="left:1981px;background:#444;border:1px solid #3b3b3b;border-bottom:none;height:27px;"></div>
<div class="tab" style="left:2013px;"></div><div class="tab" style="left:2045px;"></div><div class="tab" style="left:2077px;"></div><div class="tab" style="left:2109px;"></div><div class="tab" style="left:2141px;"></div>
<div class="a" style="left:1986px;top:128px;width:20px;height:20px;background:#5a8bd0;border-radius:3px;"></div>
<svg width="2415" height="1568" viewBox="0 0 2415 1568">
<!-- tab icons -->
<path d="M1987.5,109H2003.5M1995.5,101V117" stroke="#e6e6e6" stroke-width="2"/>
<g transform="translate(2020,101)"><rect x="1.5" y="1.5" width="13" height="13" fill="none" stroke="#3aa6a8" stroke-width="1.2" stroke-dasharray="9,4" stroke-dashoffset="-2"/><g fill="none" stroke="#3aa6a8" stroke-width="1.1"><rect x="0" y="0" width="3" height="3"/><rect x="13" y="0" width="3" height="3"/><rect x="0" y="13" width="3" height="3"/><rect x="13" y="13" width="3" height="3"/></g><path d="M5,12 Q6,5.5 12.5,4.5" fill="none" stroke="#8a8a8a" stroke-width="2"/></g>
<g transform="translate(2052,101)"><rect x="2" y="0.5" width="12" height="5" fill="#8a8a8a"/><path d="M8,5.5V8.5M2.5,13.5V8.8H13.5V13.5" fill="none" stroke="#3aa6a8" stroke-width="1.3"/><rect x="1" y="13.3" width="3.2" height="3.2" fill="#3aa6a8"/><rect x="11.8" y="13.3" width="3.2" height="3.2" fill="#3aa6a8"/></g>
<g transform="translate(2083,102)"><path d="M7,0.5A7,7 0 0 0 7,14.5" fill="none" stroke="#3aa6a8" stroke-width="1"/><path d="M9.5,0.8A7,7 0 0 0 9.5,14.2" fill="none" stroke="#3aa6a8" stroke-width="1"/><circle cx="12" cy="7.5" r="6.6" fill="#8a8a8a"/></g>
<g transform="translate(2116,102)"><rect x="0" y="0.5" width="16" height="9.5" fill="#8a8a8a"/><rect x="4" y="13.2" width="8" height="1.3" fill="#8a8a8a"/><path d="M6,13.3L7,12H9L10,13.3Z" fill="#8a8a8a"/></g>
<g transform="translate(2148,101)"><path d="M3.5,3.5L15,15" stroke="#8a8a8a" stroke-width="2.6" stroke-linecap="round"/><path d="M0.8,2.6 A3.4,3.4 0 1 0 5.5,0.6 L3.6,3.4Z" fill="#8a8a8a"/><circle cx="14.8" cy="14.8" r=".8" fill="#3a3a3a"/></g>
<!-- category icons -->
<circle cx="1996" cy="138.2" r="7.4" fill="#d6d6d6" stroke="#3a3a3a" stroke-width=".9"/>
<g transform="translate(2010,130)" fill="#d2d2d2"><circle cx="6" cy="5.8" r="5.2"/><rect x="5.2" y="5.6" width="9.6" height="9.6" stroke="#444" stroke-width="1"/><path d="M5.7,10.9A5.2,5.2 0 0 0 11.1,6.1H5.7Z" fill="#8a8a8a"/></g>
<g transform="translate(2034,130)" fill="#d2d2d2"><path d="M6,0.3A5.4,5.4 0 0 1 9,10.2L8.6,11.5H3.4L3,10.2A5.4,5.4 0 0 1 6,0.3Z"/><rect x="3.6" y="12.3" width="4.8" height="1.1"/><rect x="4" y="14.1" width="4" height="1.1"/></g>
<g transform="translate(2054,131.5)" fill="#d2d2d2"><rect x="0.5" y="1.5" width="10" height="10" rx="1"/><path d="M11,5.2L14.6,2.2V10.8L11,7.8Z"/></g>
<g transform="translate(2076,130)"><path d="M1,1.5V15.5H15Z" fill="#d2d2d2"/><path d="M4.5,9.8V12.4H7.2Z" fill="#444"/><path d="M1,3.5h1.6M1,5.5h1.6M1,7.5h1.6M1,9.5h1.6M1,11.5h1.6M1,13.5h1.6" stroke="#444" stroke-width=".6"/></g>
<g transform="translate(2098,131)" fill="none" stroke="#d2d2d2" stroke-width="1.5"><path d="M0.5,4 q2.4,-3 4.8,-1 t4.8,-0.4 t4.4,-1.6"/><path d="M0.5,8.4 q2.4,-3 4.8,-1 t4.8,-0.4 t4.4,-1.6"/><path d="M0.5,12.8 q2.4,-3 4.8,-1 t4.8,-0.4 t4.4,-1.6"/></g>
<g fill="none" stroke="#d2d2d2"><circle cx="2124.5" cy="134" r="2.4" stroke-width="1.5"/><circle cx="2124.5" cy="134" r="3.6" stroke-width="1.4" stroke-dasharray="1.4,1.42"/><circle cx="2131" cy="140.5" r="3" stroke-width="1.7"/><circle cx="2131" cy="140.5" r="4.4" stroke-width="1.6" stroke-dasharray="1.7,1.75"/></g>
</svg>
<div class="a" style="left:1985px;top:155px;width:211px;height:20px;background:#5f5f5f;"></div>
<span class="t" style="left:1989.30px;top:160.04px;font-size:12px;line-height:12px;color:#e6e6e6;transform:scaleX(0.8862);transform-origin:0 50%;">Standard Primitives</span>

<div class="a" style="left:1985px;top:181px;width:203px;height:167px;background:#515151;border-radius:3px;border:1px solid #474747;"></div>
<div class="a" style="left:1985px;top:352px;width:203px;height:55px;background:#515151;border-radius:3px;border:1px solid #474747;"></div>
<svg width="2415" height="1568"><path d="M2183,162h6.6l-3.3,4.2z" fill="#e0e0e0"/>
<path d="M1990.5,187.3h6.4l-3.2,4.2z M1990.5,358.3h6.4l-3.2,4.2z" fill="#bdbdbd"/>
<g fill="#8c8c8c"><rect x="2175.6" y="187" width="1" height="1"/><rect x="2177.6" y="187" width="1" height="1"/><rect x="2179.6" y="187" width="1" height="1"/><rect x="2175.6" y="189" width="1" height="1"/><rect x="2177.6" y="189" width="1" height="1"/><rect x="2179.6" y="189" width="1" height="1"/><rect x="2175.6" y="191" width="1" height="1"/><rect x="2177.6" y="191" width="1" height="1"/><rect x="2179.6" y="191" width="1" height="1"/>
<rect x="2175.6" y="358" width="1" height="1"/><rect x="2177.6" y="358" width="1" height="1"/><rect x="2179.6" y="358" width="1" height="1"/><rect x="2175.6" y="360" width="1" height="1"/><rect x="2177.6" y="360" width="1" height="1"/><rect x="2179.6" y="360" width="1" height="1"/><rect x="2175.6" y="362" width="1" height="1"/><rect x="2177.6" y="362" width="1" height="1"/><rect x="2179.6" y="362" width="1" height="1"/></g></svg>
<span class="t" style="left:2003.60px;top:184.74px;font-size:12px;line-height:12px;color:#fff;font-weight:700;transform:scaleX(1.0119);transform-origin:0 50%;">Object Type</span>
<span class="t" style="left:2003.60px;top:355.84px;font-size:12px;line-height:12px;color:#fff;font-weight:700;transform:scaleX(0.9607);transform-origin:0 50%;">Name and Color</span>
<div class="a" style="left:2039px;top:205px;width:10px;height:10px;background:#4a4a4a;"></div>
<span class="t" style="left:2051.70px;top:204.54px;font-size:12px;line-height:12px;color:#868686;transform:scaleX(0.8742);transform-origin:0 50%;">AutoGrid</span>
<div class="pb" style="left:2013.5px;top:221px;"></div><div class="pb" style="left:2091.5px;top:221px;"></div>
<div class="pb" style="left:2013.5px;top:242px;"></div><div class="pb" style="left:2091.5px;top:242px;"></div>
<div class="pb" style="left:2013.5px;top:263px;"></div><div class="pb" style="left:2091.5px;top:263px;"></div>
<div class="pb" style="left:2013.5px;top:284px;"></div><div class="pb" style="left:2091.5px;top:284px;"></div>
<div class="pb" style="left:2013.5px;top:305px;"></div><div class="pb" style="left:2091.5px;top:305px;"></div>
<div class="pb" style="left:2013.5px;top:326px;"></div>
<span class="t" style="left:2037.16px;top:223.84px;font-size:12px;line-height:12px;color:#e2e2e2;transform:scaleX(0.8705);transform-origin:50% 50%;">Box</span><span class="t" style="left:2111.16px;top:223.84px;font-size:12px;line-height:12px;color:#e2e2e2;transform:scaleX(0.8575);transform-origin:50% 50%;">Cone</span>
<span class="t" style="left:2028.15px;top:244.84px;font-size:12px;line-height:12px;color:#e2e2e2;transform:scaleX(0.8709);transform-origin:50% 50%;">Sphere</span><span class="t" style="left:2094.81px;top:244.84px;font-size:12px;line-height:12px;color:#e2e2e2;transform:scaleX(0.8603);transform-origin:50% 50%;">GeoSphere</span>
<span class="t" style="left:2025.49px;top:265.84px;font-size:12px;line-height:12px;color:#e2e2e2;transform:scaleX(0.8838);transform-origin:50% 50%;">Cylinder</span><span class="t" style="left:2112.05px;top:265.84px;font-size:12px;line-height:12px;color:#e2e2e2;transform:scaleX(0.8845);transform-origin:50% 50%;">Tube</span>
<span class="t" style="left:2032.83px;top:286.84px;font-size:12px;line-height:12px;color:#e2e2e2;transform:scaleX(0.9303);transform-origin:50% 50%;">Torus</span><span class="t" style="left:2103.49px;top:286.84px;font-size:12px;line-height:12px;color:#e2e2e2;transform:scaleX(0.8634);transform-origin:50% 50%;">Pyramid</span>
<span class="t" style="left:2029.49px;top:307.84px;font-size:12px;line-height:12px;color:#e2e2e2;transform:scaleX(0.9464);transform-origin:50% 50%;">Teapot</span><span class="t" style="left:2110.15px;top:307.84px;font-size:12px;line-height:12px;color:#e2e2e2;transform:scaleX(0.8471);transform-origin:50% 50%;">Plane</span>
<span class="t" style="left:2024.82px;top:328.84px;font-size:12px;line-height:12px;color:#e2e2e2;transform:scaleX(0.9129);transform-origin:50% 50%;">TextPlus</span>
<div class="a" style="left:2011.5px;top:378.5px;width:131px;height:19px;background:#4b4b4b;border:1px solid #454545;"></div>
<div class="a" style="left:2146px;top:378.5px;width:17px;height:19px;background:#3b5866;border:1px solid #111;"></div>
<!-- time slider -->
<svg width="2415" height="1568"><defs><pattern id="gripV" width="3.4" height="2" patternUnits="userSpaceOnUse"><rect x="0" y="0" width="1" height="1" fill="#9a9a9a"/><rect x="2" y="1" width="1" height="1" fill="#9a9a9a"/></pattern></defs>
<rect x="3.5" y="1466" width="3.4" height="43" fill="url(#gripV)"/></svg>
<div class="a" style="left:11px;top:1464px;width:14px;height:16px;background:#5e5e5e;border-radius:3px;"></div>
<div class="a" style="left:27px;top:1464px;width:123px;height:16px;background:#646464;border-radius:3px;"></div>
<div class="a" style="left:152px;top:1464px;width:14px;height:16px;background:#5e5e5e;border-radius:3px;"></div>
<span class="t" style="left:14.50px;top:1467.14px;font-size:12px;line-height:12px;color:#dcdcdc;">&lt;</span>
<span class="t" style="left:155.50px;top:1467.14px;font-size:12px;line-height:12px;color:#dcdcdc;">&gt;</span>
<span class="t" style="left:69.15px;top:1466.84px;font-size:12px;line-height:12px;color:#e2e2e2;transform:scaleX(0.9265);transform-origin:50% 50%;">0 / 100</span>
<!-- track bar -->
<div class="a" style="left:10px;top:1485px;width:2405px;height:1.4px;background:#0c0c0c;"></div>
<div class="a" style="left:60px;top:1486px;width:2304px;height:24px;background:#2a2a2a;"></div>
<div class="a" style="left:66.6px;top:1487px;width:7.8px;height:23px;background:#847822;border:1px solid #9a8a20;box-sizing:border-box;"></div>
<svg width="2415" height="1568" viewBox="0 0 2415 1568"><defs>
<pattern id="tick2" x="70.5" y="1485" width="45.64" height="40" patternUnits="userSpaceOnUse"><rect x="0" y="0" width="1.1" height="13" fill="#8c8c8c"/><rect x="0" y="24" width="1.1" height="2" fill="#8c8c8c"/><rect x="22.82" y="0" width="1.1" height="12" fill="#8c8c8c"/></pattern></defs>
<rect x="70.5" y="1485" width="2284" height="26" fill="url(#tick2)"/>
<path d="M24.5,1494.5v8.5" stroke="#d2d2d2" stroke-width="3" stroke-dasharray="1.1,1"/><path d="M29,1498 q2.4,-6 4.4,0 t4.4,1" fill="none" stroke="#41c1c3" stroke-width="1.5"/>
</svg>
<span class="t" style="left:68.70px;top:1499.47px;font-size:11.5px;line-height:11.5px;color:#c9b94a;transform:scaleX(0.9694);transform-origin:50% 50%;">0</span><span class="t" style="left:114.34px;top:1499.47px;font-size:11.5px;line-height:11.5px;color:#c4c4c4;transform:scaleX(0.9694);transform-origin:50% 50%;">2</span><span class="t" style="left:159.98px;top:1499.47px;font-size:11.5px;line-height:11.5px;color:#c4c4c4;transform:scaleX(0.9694);transform-origin:50% 50%;">4</span><span class="t" style="left:205.62px;top:1499.47px;font-size:11.5px;line-height:11.5px;color:#c4c4c4;transform:scaleX(0.9694);transform-origin:50% 50%;">6</span><span class="t" style="left:251.26px;top:1499.47px;font-size:11.5px;line-height:11.5px;color:#c4c4c4;transform:scaleX(0.9694);transform-origin:50% 50%;">8</span><span class="t" style="left:293.70px;top:1499.47px;font-size:11.5px;line-height:11.5px;color:#c4c4c4;transform:scaleX(0.9616);transform-origin:50% 50%;">10</span><span class="t" style="left:339.34px;top:1499.47px;font-size:11.5px;line-height:11.5px;color:#c4c4c4;transform:scaleX(0.9616);transform-origin:50% 50%;">12</span><span class="t" style="left:384.98px;top:1499.47px;font-size:11.5px;line-height:11.5px;color:#c4c4c4;transform:scaleX(0.9616);transform-origin:50% 50%;">14</span><span class="t" style="left:430.62px;top:1499.47px;font-size:11.5px;line-height:11.5px;color:#c4c4c4;transform:scaleX(0.9616);transform-origin:50% 50%;">16</span><span class="t" style="left:476.26px;top:1499.47px;font-size:11.5px;line-height:11.5px;color:#c4c4c4;transform:scaleX(0.9616);transform-origin:50% 50%;">18</span><span class="t" style="left:521.90px;top:1499.47px;font-size:11.5px;line-height:11.5px;color:#c4c4c4;transform:scaleX(0.9616);transform-origin:50% 50%;">20</span><span class="t" style="left:567.54px;top:1499.47px;font-size:11.5px;line-height:11.5px;color:#c4c4c4;transform:scaleX(0.9616);transform-origin:50% 50%;">22</span><span class="t" style="left:613.18px;top:1499.47px;font-size:11.5px;line-height:11.5px;color:#c4c4c4;transform:scaleX(0.9616);transform-origin:50% 50%;">24</span><span class="t" style="left:658.82px;top:1499.47px;font-size:11.5px;line-height:11.5px;color:#c4c4c4;transform:scaleX(0.9616);transform-origin:50% 50%;">26</span><span class="t" style="left:704.46px;top:1499.47px;font-size:11.5px;line-height:11.5px;color:#c4c4c4;transform:scaleX(0.9616);transform-origin:50% 50%;">28</span><span class="t" style="left:750.10px;top:1499.47px;font-size:11.5px;line-height:11.5px;color:#c4c4c4;transform:scaleX(0.9616);transform-origin:50% 50%;">30</span><span class="t" style="left:795.74px;top:1499.47px;font-size:11.5px;line-height:11.5px;color:#c4c4c4;transform:scaleX(0.9616);transform-origin:50% 50%;">32</span><span class="t" style="left:841.38px;top:1499.47px;font-size:11.5px;line-height:11.5px;color:#c4c4c4;transform:scaleX(0.9616);transform-origin:50% 50%;">34</span><span class="t" style="left:887.02px;top:1499.47px;font-size:11.5px;line-height:11.5px;color:#c4c4c4;transform:scaleX(0.9616);transform-origin:50% 50%;">36</span><span class="t" style="left:932.66px;top:1499.47px;font-size:11.5px;line-height:11.5px;color:#c4c4c4;transform:scaleX(0.9616);transform-origin:50% 50%;">38</span><span class="t" style="left:978.30px;top:1499.47px;font-size:11.5px;line-height:11.5px;color:#c4c4c4;transform:scaleX(0.9616);transform-origin:50% 50%;">40</span><span class="t" style="left:1023.94px;top:1499.47px;font-size:11.5px;line-height:11.5px;color:#c4c4c4;transform:scaleX(0.9616);transform-origin:50% 50%;">42</span><span class="t" style="left:1069.58px;top:1499.47px;font-size:11.5px;line-height:11.5px;color:#c4c4c4;transform:scaleX(0.9616);transform-origin:50% 50%;">44</span><span class="t" style="left:1115.22px;top:1499.47px;font-size:11.5px;line-height:11.5px;color:#c4c4c4;transform:scaleX(0.9616);transform-origin:50% 50%;">46</span><span class="t" style="left:1160.86px;top:1499.47px;font-size:11.5px;line-height:11.5px;color:#c4c4c4;transform:scaleX(0.9616);transform-origin:50% 50%;">48</span><span class="t" style="left:1206.50px;top:1499.47px;font-size:11.5px;line-height:11.5px;color:#c4c4c4;transform:scaleX(0.9616);transform-origin:50% 50%;">50</span><span class="t" style="left:1252.14px;top:1499.47px;font-size:11.5px;line-height:11.5px;color:#c4c4c4;transform:scaleX(0.9616);transform-origin:50% 50%;">52</span><span class="t" style="left:1297.78px;top:1499.47px;font-size:11.5px;line-height:11.5px;color:#c4c4c4;transform:scaleX(0.9616);transform-origin:50% 50%;">54</span><span class="t" style="left:1343.42px;top:1499.47px;font-size:11.5px;line-height:11.5px;color:#c4c4c4;transform:scaleX(0.9616);transform-origin:50% 50%;">56</span><span class="t" style="left:1389.06px;top:1499.47px;font-size:11.5px;line-height:11.5px;color:#c4c4c4;transform:scaleX(0.9616);transform-origin:50% 50%;">58</span><span class="t" style="left:1434.70px;top:1499.47px;font-size:11.5px;line-height:11.5px;color:#c4c4c4;transform:scaleX(0.9616);transform-origin:50% 50%;">60</span><span class="t" style="left:1480.34px;top:1499.47px;font-size:11.5px;line-height:11.5px;color:#c4c4c4;transform:scaleX(0.9616);transform-origin:50% 50%;">62</span><span class="t" style="left:1525.98px;top:1499.47px;font-size:11.5px;line-height:11.5px;color:#c4c4c4;transform:scaleX(0.9616);transform-origin:50% 50%;">64</span><span class="t" style="left:1571.62px;top:1499.47px;font-size:11.5px;line-height:11.5px;color:#c4c4c4;transform:scaleX(0.9616);transform-origin:50% 50%;">66</span><span class="t" style="left:1617.26px;top:1499.47px;font-size:11.5px;line-height:11.5px;color:#c4c4c4;transform:scaleX(0.9616);transform-origin:50% 50%;">68</span><span class="t" style="left:1662.90px;top:1499.47px;font-size:11.5px;line-height:11.5px;color:#c4c4c4;transform:scaleX(0.9616);transform-origin:50% 50%;">70</span><span class="t" style="left:1708.54px;top:1499.47px;font-size:11.5px;line-height:11.5px;color:#c4c4c4;transform:scaleX(0.9616);transform-origin:50% 50%;">72</span><span class="t" style="left:1754.18px;top:1499.47px;font-size:11.5px;line-height:11.5px;color:#c4c4c4;transform:scaleX(0.9616);transform-origin:50% 50%;">74</span><span class="t" style="left:1799.82px;top:1499.47px;font-size:11.5px;line-height:11.5px;color:#c4c4c4;transform:scaleX(0.9616);transform-origin:50% 50%;">76</span><span class="t" style="left:1845.46px;top:1499.47px;font-size:11.5px;line-height:11.5px;color:#c4c4c4;transform:scaleX(0.9616);transform-origin:50% 50%;">78</span><span class="t" style="left:1891.10px;top:1499.47px;font-size:11.5px;line-height:11.5px;color:#c4c4c4;transform:scaleX(0.9616);transform-origin:50% 50%;">80</span><span class="t" style="left:1936.74px;top:1499.47px;font-size:11.5px;line-height:11.5px;color:#c4c4c4;transform:scaleX(0.9616);transform-origin:50% 50%;">82</span><span class="t" style="left:1982.38px;top:1499.47px;font-size:11.5px;line-height:11.5px;color:#c4c4c4;transform:scaleX(0.9616);transform-origin:50% 50%;">84</span><span class="t" style="left:2028.02px;top:1499.47px;font-size:11.5px;line-height:11.5px;color:#c4c4c4;transform:scaleX(0.9616);transform-origin:50% 50%;">86</span><span class="t" style="left:2073.66px;top:1499.47px;font-size:11.5px;line-height:11.5px;color:#c4c4c4;transform:scaleX(0.9616);transform-origin:50% 50%;">88</span><span class="t" style="left:2119.30px;top:1499.47px;font-size:11.5px;line-height:11.5px;color:#c4c4c4;transform:scaleX(0.9616);transform-origin:50% 50%;">90</span><span class="t" style="left:2164.94px;top:1499.47px;font-size:11.5px;line-height:11.5px;color:#c4c4c4;transform:scaleX(0.9616);transform-origin:50% 50%;">92</span><span class="t" style="left:2210.58px;top:1499.47px;font-size:11.5px;line-height:11.5px;color:#c4c4c4;transform:scaleX(0.9616);transform-origin:50% 50%;">94</span><span class="t" style="left:2256.22px;top:1499.47px;font-size:11.5px;line-height:11.5px;color:#c4c4c4;transform:scaleX(0.9616);transform-origin:50% 50%;">96</span><span class="t" style="left:2301.86px;top:1499.47px;font-size:11.5px;line-height:11.5px;color:#c4c4c4;transform:scaleX(0.9616);transform-origin:50% 50%;">98</span><span class="t" style="left:2344.31px;top:1499.47px;font-size:11.5px;line-height:11.5px;color:#c4c4c4;transform:scaleX(0.9902);transform-origin:50% 50%;">100</span>
<!-- status bar -->
<div class="a" style="left:5px;top:1516px;width:143px;height:22px;background:#dcc3c3;border:2px solid #d9d9d9;border-top-color:#8a8a8a;border-left-color:#8a8a8a;"></div>
<div class="a" style="left:5px;top:1539px;width:143px;height:23px;background:#fff;border:2px solid #d9d9d9;border-top-color:#8a8a8a;border-left-color:#8a8a8a;"></div>
<span class="t" style="left:11.60px;top:1544.57px;font-size:11.5px;line-height:11.5px;color:#1414e6;font-family:'Liberation Mono',monospace;">&quot;sLib v 1.50 has be</span>
<div class="a" style="left:151px;top:1514px;width:2.6px;height:51px;background:#1f1f1f;border-right:1px solid #5a5a5a;"></div>
<span class="t" style="left:157.30px;top:1523.04px;font-size:12px;line-height:12px;color:#fff;transform:scaleX(0.8829);transform-origin:0 50%;">None Selected</span>
<span class="t" style="left:157.30px;top:1548.04px;font-size:12px;line-height:12px;color:#fff;transform:scaleX(0.8915);transform-origin:0 50%;">Click or click-and-drag to select objects</span>
<div class="a" style="left:0;top:1566px;width:2415px;height:2px;background:#747474;"></div>
<!-- coords -->
<svg width="2415" height="1568" viewBox="0 0 2415 1568">
<g fill="none" stroke="#262626" stroke-width="1.3"><path d="M1502.5,1524.5v-4h4M1513.5,1520.5h4v4M1517.5,1531.5v4h-4M1506.5,1535.5h-4v-4"/><rect x="1506" y="1524" width="8" height="8"/></g>
<g fill="none" stroke="#262626" stroke-width="1.4"><rect x="1531" y="1526.5" width="11.5" height="9" rx="1.5"/><path d="M1533.5,1526.5v-2.5a3.2,3.2 0 0 1 6.4,0v2.5"/><circle cx="1536.7" cy="1530" r="1.2" fill="#262626"/><path d="M1536.7,1530v3"/></g>
<g><rect x="1557" y="1521" width="14" height="14" fill="none" stroke="#e8e8e8" stroke-width="1.3"/><circle cx="1564" cy="1528" r="4.2" fill="none" stroke="#e8e8e8" stroke-width="1.6"/><path d="M1557,1521l4,4M1571,1521l-4,4M1557,1535l4,-4M1571,1535l-4,-4" stroke="#e8e8e8" stroke-width="2.4"/></g>
</svg>
<span class="t" style="left:1579.40px;top:1522.54px;font-size:12px;line-height:12px;color:#fff;font-weight:700;transform:scaleX(0.8750);transform-origin:0 50%;">X:</span>
<div class="a" style="left:1592.5px;top:1520px;width:58px;height:17px;background:#595959;"></div>
<span class="t" style="left:1596.00px;top:1523.44px;font-size:12px;line-height:12px;color:#8e8e8e;transform:scaleX(0.8893);transform-origin:0 50%;">-208.417cn</span>
<span class="t" style="left:1663.50px;top:1522.54px;font-size:12px;line-height:12px;color:#fff;font-weight:700;transform:scaleX(0.9001);transform-origin:0 50%;">Y:</span>
<div class="a" style="left:1676.7px;top:1520px;width:57.5px;height:17px;background:#595959;"></div>
<span class="t" style="left:1679.70px;top:1523.44px;font-size:12px;line-height:12px;color:#8e8e8e;transform:scaleX(0.8960);transform-origin:0 50%;">-56.016cm</span>
<span class="t" style="left:1747.60px;top:1522.54px;font-size:12px;line-height:12px;color:#fff;font-weight:700;transform:scaleX(0.8476);transform-origin:0 50%;">Z:</span>
<div class="a" style="left:1760.8px;top:1520px;width:57.5px;height:17px;background:#595959;"></div>
<span class="t" style="left:1763.40px;top:1523.44px;font-size:12px;line-height:12px;color:#8e8e8e;transform:scaleX(0.8813);transform-origin:0 50%;">0.0cm</span>
<span class="t" style="left:1833.40px;top:1522.54px;font-size:12px;line-height:12px;color:#fff;transform:scaleX(0.8983);transform-origin:0 50%;">Grid = 10.0cm</span>
<div class="a" style="left:1806px;top:1545px;width:1.3px;height:17px;background:#0e0e0e;"></div>
<div class="a" style="left:1808.2px;top:1543px;width:20.7px;height:20px;background:#5a8bd0;border-radius:3px;"></div>
<svg width="2415" height="1568" viewBox="0 0 2415 1568"><g fill="none" stroke="#1e1e1e" stroke-width="1.1"><path d="M1818.5,1546.5l5.6,3.2v6.6l-5.6,3.2l-5.6,-3.2v-6.6z"/><path d="M1812.9,1549.7l5.6,3.2l5.6,-3.2M1818.5,1552.9v6.6" stroke="#f0f0f0"/><path d="M1818.5,1546.5l5.6,3.2v6.6l-5.6,3.2l-5.6,-3.2v-6.6z" stroke="#f0f0f0" stroke-width=".9"/></g></svg>
<span class="t" style="left:1834.00px;top:1547.84px;font-size:12px;line-height:12px;color:#fff;transform:scaleX(0.8817);transform-origin:0 50%;">Add Time Tag</span>
<!-- playback -->
<svg width="2415" height="1568" viewBox="0 0 2415 1568">
<g fill="#d6d6d6">
<rect x="1946" y="1523" width="2.2" height="10.5"/><path d="M1949.2,1528.2L1954.6,1523.4V1533Z M1955.2,1528.2L1960.8,1523.4V1533Z"/>
<path d="M1973.4,1528.2L1979.4,1523V1533.4Z"/><rect x="1981" y="1523" width="2.2" height="10.5"/><rect x="1985" y="1523" width="2.2" height="10.5"/>
<path d="M1996.8,1521.4L2008.4,1528.3L1996.8,1535.2Z"/><path d="M2008.2,1537.5h3.6v-3.6z"/>
<rect x="2018.8" y="1523" width="2.2" height="10.5"/><rect x="2022.8" y="1523" width="2.2" height="10.5"/><path d="M2026.6,1523V1533.4L2032.7,1528.2Z"/>
<path d="M2045,1523.4V1533L2050.4,1528.2Z M2051,1523.4V1533L2056.4,1528.2Z"/><rect x="2057.3" y="1523" width="2.2" height="10.5"/>
<path d="M1948.2,1550.2L1953.4,1546.2V1554.2Z M1960.2,1550.2L1955,1546.2V1554.2Z"/>
</g>
<g fill="#0e0e0e"><rect x="1966.8" y="1520" width="1.3" height="16"/><rect x="2039" y="1520" width="1.3" height="16"/><rect x="1966.8" y="1542" width="1.3" height="16"/><rect x="2039" y="1542" width="1.3" height="16"/></g>
<rect x="1970" y="1542" width="68.3" height="16" fill="#5c5c5c"/>
<path d="M2029.8,1548.4h5l-2.5,-3.2z M2029.8,1551.6h5l-2.5,3.2z" fill="#c8c8c8"/>
<circle cx="2051.5" cy="1548.5" r="5.6" fill="#d6d6d6"/><path d="M2051.5,1544.5v4.2h3.6" fill="none" stroke="#444" stroke-width="1.2"/>
<g transform="translate(2056.5,1553.5)"><circle r="2.6" fill="none" stroke="#fbb01a" stroke-width="2.2"/><g stroke="#fbb01a" stroke-width="1.6"><path d="M0,-4.4V4.4M-4.4,0H4.4M-3.1,-3.1L3.1,3.1M-3.1,3.1L3.1,-3.1"/></g><circle r="1.3" fill="#444"/></g>
<!-- big key button -->
<rect x="2075" y="1518" width="42" height="42" rx="5" fill="#5f5f5f"/>
<path d="M2091,1525.2h7v9h8.4v7h-8.4v8.2h-7v-8.2h-8.8v-7h8.8z" fill="#d9d9d9"/>
<g transform="translate(2099.5,1550) rotate(-38)" fill="none" stroke="#41c1c3" stroke-width="1.9"><circle r="2.7"/><path d="M2.7,0H12.5M9,0v2.8M11.8,0v2.8"/></g>
<rect x="2122" y="1518.2" width="46" height="19.5" rx="3.5" fill="#5f5f5f"/><rect x="2122" y="1540.3" width="46" height="19.6" rx="3.5" fill="#5f5f5f"/>
<rect x="2173" y="1518.2" width="114.4" height="19.2" fill="#5f5f5f"/><path d="M2273.6,1525.6h6.6l-3.3,4.4z" fill="#e0e0e0"/>
<rect x="2199.2" y="1541" width="88.2" height="19.5" rx="3.5" fill="#5f5f5f"/>
<!-- key tangent -->
<g fill="none" stroke="#41c1c3" stroke-width="1.7"><path d="M2177.5,1558 q3.5,-6 3.6,-11.2M2189.5,1558 q-3.5,-6 -3.6,-11.2"/></g><rect x="2181.6" y="1544.6" width="3.8" height="3.8" fill="none" stroke="#d2d2d2" stroke-width="1"/><circle cx="2177.6" cy="1546.5" r="1.1" fill="#d2d2d2"/><circle cx="2189.4" cy="1546.5" r="1.1" fill="#d2d2d2"/><path d="M2187.5,1561.5h3.6v-3.6z" fill="#d2d2d2"/>
<!-- nav icons -->
<g transform="translate(2300,1520)"><rect x="0.5" y="5.5" width="5" height="4.6" fill="#41c1c3"/><path d="M5.5,6.5L7.8,7.8L5.5,9.1Z" fill="#41c1c3"/><path d="M11.5,1V15M11.5,0L8.6,4H14.4ZM11.5,16L8.6,12H14.4Z" stroke="#d6d6d6" stroke-width="1.6" fill="#d6d6d6"/><path d="M13.5,17.5h3.6v-3.6z" fill="#d2d2d2"/></g>
<g transform="translate(2322,1520)"><path d="M8,1L14.5,4.5V10L8,13.5L1.5,10V4.5Z M1.5,4.5L8,8L14.5,4.5M8,8V13.5" fill="none" stroke="#d6d6d6" stroke-width="1.3" stroke-dasharray="2.2,1.2"/><rect x="7.5" y="9.5" width="7" height="5.4" fill="#fbb01a"/><path d="M14.5,11L16.6,9.8V14.6L14.5,13.4Z" fill="#fbb01a"/></g>
<g transform="translate(2345,1520)"><path d="M4,2.5A7,7 0 0 0 4,13.5M12,2.5A7,7 0 0 1 12,13.5" fill="none" stroke="#d6d6d6" stroke-width="2.4"/><path d="M1.5,1.5H7V5.8Z M14.5,1.5H9V5.8Z" fill="#d6d6d6"/><rect x="6.5" y="9.8" width="7" height="5.4" fill="#fbb01a"/><path d="M13.5,11.3L15.6,10.1V14.9L13.5,13.7Z" fill="#fbb01a"/></g>
<g transform="translate(2368,1520)"><path d="M9,3.5a3,1.4 0 0 1 6,0V11a3,1.4 0 0 1 -6,0Z" fill="#41c1c3"/><ellipse cx="12" cy="3.5" rx="3" ry="1.4" fill="#8fe0e0"/><path d="M1,9L3.8,6.6L6.6,9L3.8,11.4Z M5,12.5L7.8,10.1L10.6,12.5L7.8,14.9Z" fill="#d6d6d6"/><path d="M13.5,17.5h3.6v-3.6z" fill="#d2d2d2"/></g>
<g transform="translate(2300,1542)"><path d="M2.5,2L13.5,8L2.5,14" fill="none" stroke="#d6d6d6" stroke-width="1.5"/><path d="M1,14.5L8,9.5" stroke="#d6d6d6" stroke-width="1.3"/></g>
<g transform="translate(2322,1542)" fill="none" stroke="#d6d6d6" stroke-width="1.7"><circle cx="8.6" cy="2.2" r="1.5" fill="#d6d6d6" stroke="none"/><path d="M8.4,4.5L7.4,9.5L10.4,12L11,15.5M7.4,9.5L5.6,12L3.6,14.6M8.2,5.4L5,7.6M8.6,5.4L11.6,8"/></g><path d="M2335.5,1559.5h3.6v-3.6z" fill="#d2d2d2"/>
<g transform="translate(2345,1542)"><circle cx="8.5" cy="6.5" r="5.4" fill="#d6d6d6"/><ellipse cx="8.5" cy="6.5" rx="8.6" ry="2.6" fill="none" stroke="#d6d6d6" stroke-width="1.2" transform="rotate(-24 8.5 6.5)"/><rect x="5.5" y="9.8" width="7" height="5.4" fill="#fbb01a"/><path d="M12.5,11.3L14.6,10.1V14.9L12.5,13.7Z" fill="#fbb01a"/><path d="M13.5,17.5h3.6v-3.6z" fill="#d2d2d2"/></g>
<g transform="translate(2368,1542)"><rect x="1" y="1" width="14" height="14" fill="none" stroke="#d6d6d6" stroke-width="1.6"/><rect x="1" y="8" width="7" height="7" fill="#444" stroke="#d6d6d6" stroke-width="1.4"/><path d="M8,8L13,3M13,3H9M13,3V7" stroke="#d6d6d6" stroke-width="1.5" fill="none"/><path d="M8,1h7v7z" fill="#d6d6d6" opacity=".0"/></g>
<g fill="#a8a8a8"><rect x="2409" y="1554" width="2" height="2"/><rect x="2405" y="1558" width="2" height="2"/><rect x="2409" y="1558" width="2" height="2"/><rect x="2401" y="1562" width="2" height="2"/><rect x="2405" y="1562" width="2" height="2"/><rect x="2409" y="1562" width="2" height="2"/></g>
</svg>
<span class="t" style="left:1972.70px;top:1544.34px;font-size:12px;line-height:12px;color:#dcdcdc;transform:scaleX(0.9290);transform-origin:0 50%;">0</span>
<span class="t" style="left:2123.00px;top:1523.14px;font-size:12px;line-height:12px;color:#e2e2e2;transform:scaleX(0.8830);transform-origin:0 50%;">Auto Key</span>
<span class="t" style="left:2125.60px;top:1544.84px;font-size:12px;line-height:12px;color:#e2e2e2;transform:scaleX(0.8805);transform-origin:0 50%;">Set Key</span>
<span class="t" style="left:2177.60px;top:1522.14px;font-size:12px;line-height:12px;color:#e2e2e2;transform:scaleX(0.8737);transform-origin:0 50%;">Selected</span>
<span class="t" style="left:2211.30px;top:1545.34px;font-size:12px;line-height:12px;color:#e2e2e2;transform:scaleX(0.9223);transform-origin:0 50%;">Key Filters...</span>
</body></html>
